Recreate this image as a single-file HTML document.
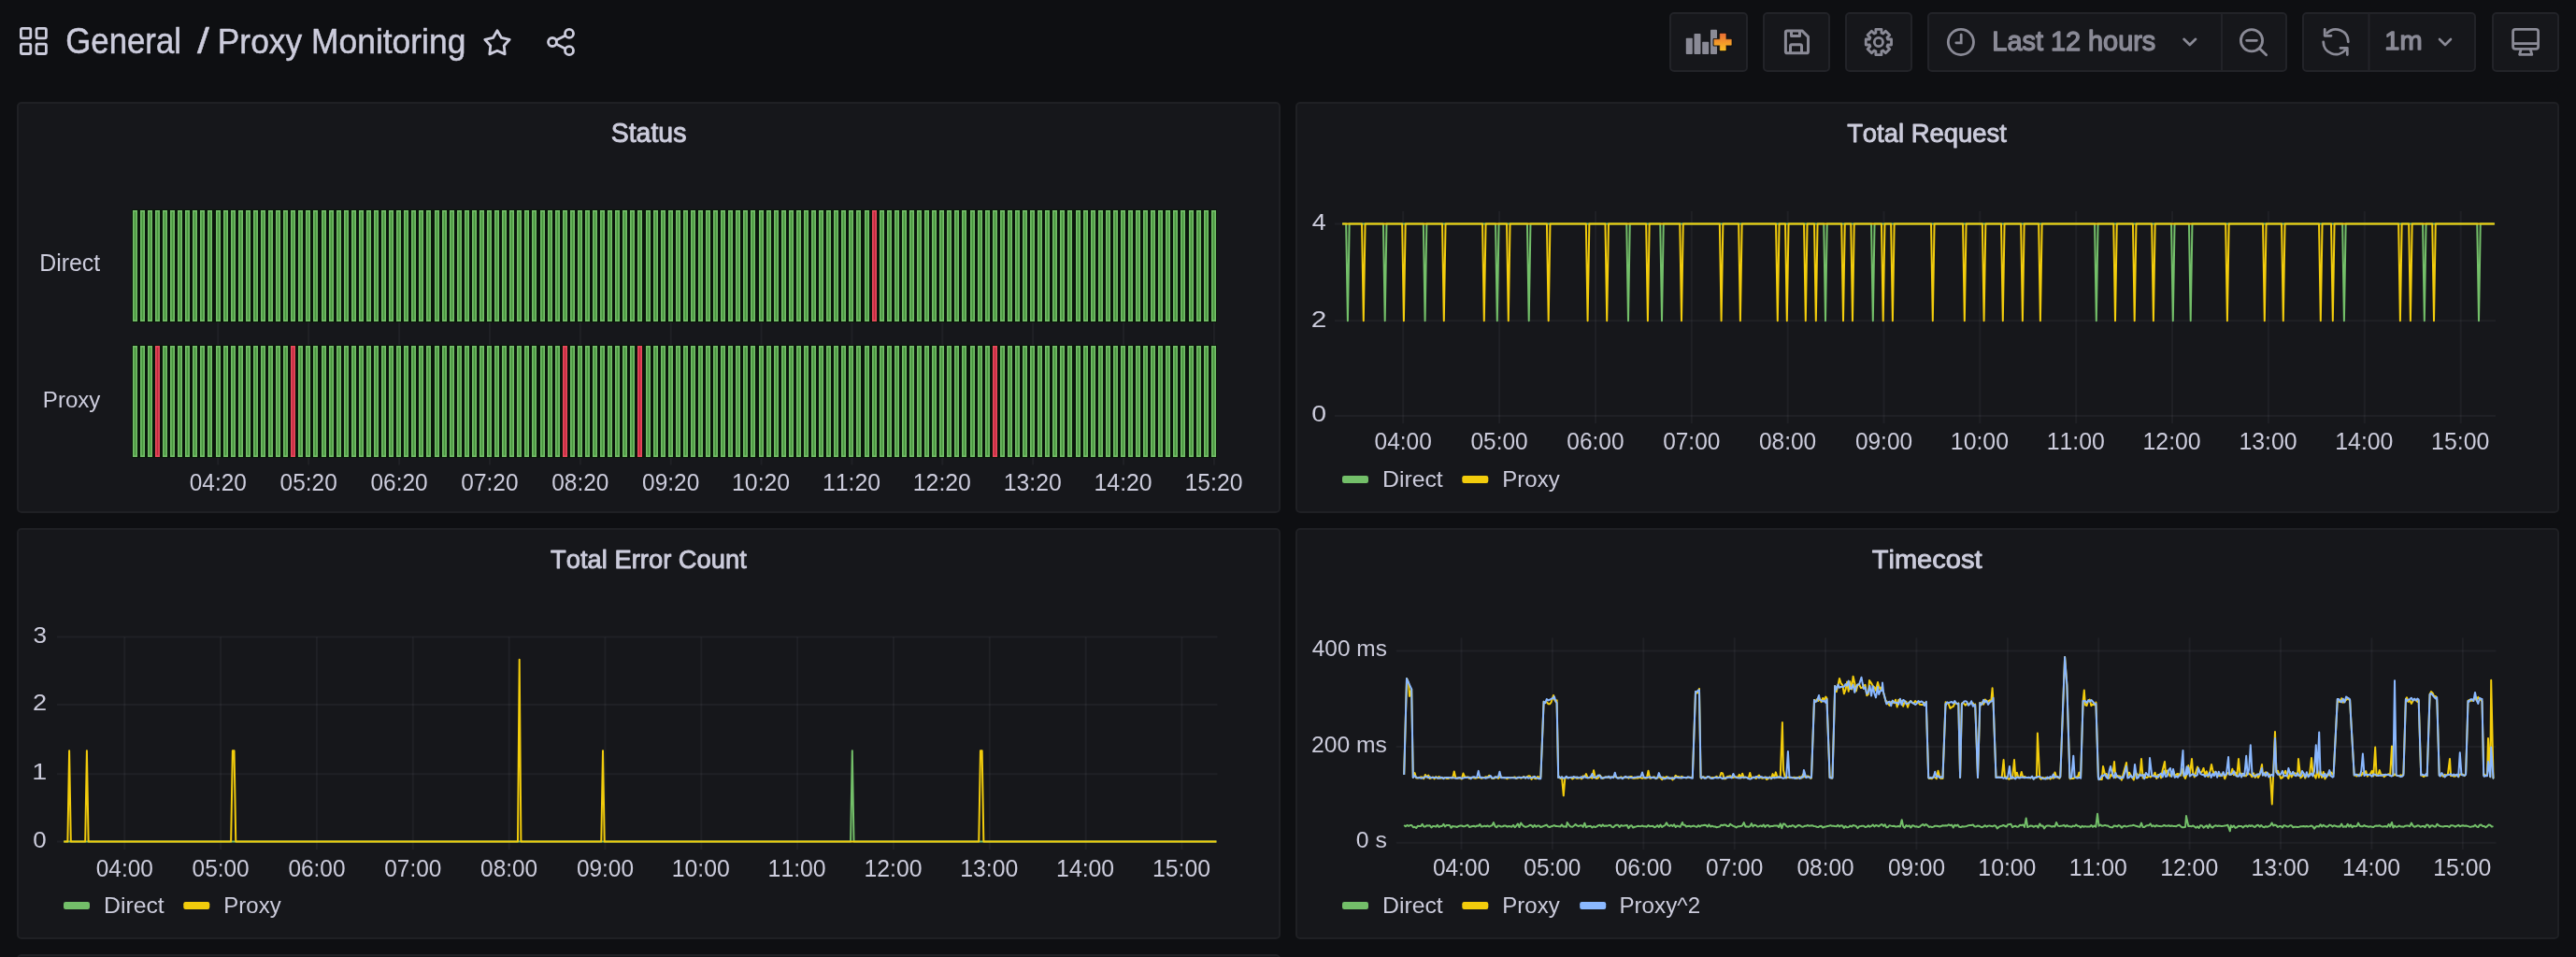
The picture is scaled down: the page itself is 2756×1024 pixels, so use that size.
<!DOCTYPE html>
<html><head><meta charset="utf-8"><title>Proxy Monitoring - Grafana</title>
<style>
html,body{margin:0;padding:0;background:#0e0f12;width:2756px;height:1024px;overflow:hidden}
svg{display:block;font-family:"Liberation Sans",sans-serif;font-kerning:none;will-change:transform}
text{font-kerning:none}
</style></head><body>
<svg width="2756" height="1024" viewBox="0 0 2756 1024">
<rect x="0" y="0" width="2756" height="1024" fill="#0e0f12"/>
<rect x="22.40" y="30.40" width="10.40" height="10.40" rx="1.5" fill="none" stroke="#ccccdc" stroke-width="2.8"/>
<rect x="39.00" y="30.40" width="10.40" height="10.40" rx="1.5" fill="none" stroke="#ccccdc" stroke-width="2.8"/>
<rect x="22.40" y="47.10" width="10.40" height="10.40" rx="1.5" fill="none" stroke="#ccccdc" stroke-width="2.8"/>
<rect x="39.00" y="47.10" width="10.40" height="10.40" rx="1.5" fill="none" stroke="#ccccdc" stroke-width="2.8"/>
<text x="70.20" y="57.05" font-size="38.81" textLength="123.88" lengthAdjust="spacingAndGlyphs" fill="#ccccdc" stroke="#ccccdc" stroke-width="0.50" stroke-linejoin="round">General</text>
<text x="211.05" y="57.05" font-size="38.81" textLength="12.90" lengthAdjust="spacingAndGlyphs" fill="#ccccdc" stroke="#ccccdc" stroke-width="0.50" stroke-linejoin="round">/</text>
<text x="232.75" y="56.75" font-size="37.06" textLength="265.59" lengthAdjust="spacingAndGlyphs" fill="#ccccdc" stroke="#ccccdc" stroke-width="0.50" stroke-linejoin="round">Proxy Monitoring</text>
<path d="M532.00 32.70 L536.47 40.45 L545.22 42.30 L539.23 48.95 L540.17 57.85 L532.00 54.20 L523.83 57.85 L524.77 48.95 L518.78 42.30 L527.53 40.45 Z" fill="none" stroke="#ccccdc" stroke-width="2.8" stroke-linejoin="round"/>
<g fill="none" stroke="#ccccdc" stroke-width="2.8">
<circle cx="591" cy="45" r="4.5"/><circle cx="609" cy="35.9" r="4.5"/><circle cx="609" cy="54.2" r="4.5"/>
<path d="M595 43 L605 37.9 M595 47.1 L605 52.2"/>
</g>
<rect x="1787.00" y="14.00" width="82.00" height="62.00" rx="4" fill="#16171b" stroke="#222328" stroke-width="2"/>
<rect x="1887.00" y="14.00" width="70.00" height="62.00" rx="4" fill="#16171b" stroke="#222328" stroke-width="2"/>
<rect x="1975.00" y="14.00" width="70.00" height="62.00" rx="4" fill="#16171b" stroke="#222328" stroke-width="2"/>
<rect x="2063.00" y="14.00" width="383.00" height="62.00" rx="4" fill="#16171b" stroke="#222328" stroke-width="2"/>
<rect x="2464.00" y="14.00" width="184.00" height="62.00" rx="4" fill="#16171b" stroke="#222328" stroke-width="2"/>
<rect x="2667.00" y="14.00" width="70.00" height="62.00" rx="4" fill="#16171b" stroke="#222328" stroke-width="2"/>
<line x1="2377" y1="14" x2="2377" y2="76" stroke="#222328" stroke-width="2"/>
<line x1="2534.5" y1="14" x2="2534.5" y2="76" stroke="#222328" stroke-width="2"/>
<rect x="1803.80" y="40.80" width="7.00" height="17.20" rx="0.8" fill="#8a8a96"/>
<rect x="1812.50" y="35.90" width="7.00" height="22.10" rx="0.8" fill="#8a8a96"/>
<rect x="1821.20" y="44.80" width="7.00" height="13.20" rx="0.8" fill="#8a8a96"/>
<rect x="1830.00" y="31.70" width="7.00" height="26.30" rx="0.8" fill="#8a8a96"/>
<defs><linearGradient id="og" x1="0" y1="0" x2="0" y2="1"><stop offset="0" stop-color="#ea6e34"/><stop offset="0.55" stop-color="#f39a2a"/><stop offset="1" stop-color="#fbbd22"/></linearGradient></defs>
<path d="M1840.2 36.1 h6.1 v6.1 h6 v6 h-6 v5.7 h-6.1 v-5.7 h-6.3 v-6 h6.3 z" fill="none" stroke="#0e0f12" stroke-width="2.6" stroke-linejoin="round"/>
<path d="M1840.2 36.1 h6.1 v6.1 h6 v6 h-6 v5.7 h-6.1 v-5.7 h-6.3 v-6 h6.3 z" fill="url(#og)" stroke="url(#og)" stroke-width="0.6" stroke-linejoin="round"/>
<g fill="none" stroke="#8a8a96" stroke-width="3" stroke-linejoin="round">
<path d="M1912 32.9 h16 l6.5 6.5 v15.8 a1.6 1.6 0 0 1 -1.6 1.6 h-20.9 a1.6 1.6 0 0 1 -1.6 -1.6 v-20.7 a1.6 1.6 0 0 1 1.6 -1.6 z"/>
<path d="M1916.5 33 v5.5 h9 v-5.5"/><path d="M1915.5 56.5 v-7.2 a1.5 1.5 0 0 1 1.5 -1.5 h9 a1.5 1.5 0 0 1 1.5 1.5 v7.2"/>
</g>
<path d="M2023.56 41.94 L2023.56 48.06 L2019.64 48.01 L2018.92 49.76 L2021.72 52.50 L2017.40 56.82 L2014.66 54.02 L2012.91 54.74 L2012.96 58.66 L2006.84 58.66 L2006.89 54.74 L2005.14 54.02 L2002.40 56.82 L1998.08 52.50 L2000.88 49.76 L2000.16 48.01 L1996.24 48.06 L1996.24 41.94 L2000.16 41.99 L2000.88 40.24 L1998.08 37.50 L2002.40 33.18 L2005.14 35.98 L2006.89 35.26 L2006.84 31.34 L2012.96 31.34 L2012.91 35.26 L2014.66 35.98 L2017.40 33.18 L2021.72 37.50 L2018.92 40.24 L2019.64 41.99 Z" fill="none" stroke="#8a8a96" stroke-width="2.8" stroke-linejoin="round"/>
<circle cx="2009.9" cy="45.0" r="4.6" fill="none" stroke="#8a8a96" stroke-width="2.8"/>
<g fill="none" stroke="#8a8a96" stroke-width="2.8" stroke-linecap="round">
<circle cx="2097.9" cy="45" r="13.6"/><path d="M2098.2 37.2 v8.6 h-5.4"/>
</g>
<text x="2131.38" y="53.65" font-size="28.63" textLength="174.91" lengthAdjust="spacingAndGlyphs" fill="#8a8a96" stroke="#8a8a96" stroke-width="1.30" stroke-linejoin="round">Last 12 hours</text>
<path d="M2336.5 41.8 L2342.8 48 L2349.1 41.8" fill="none" stroke="#8a8a96" stroke-width="2.6" stroke-linecap="round" stroke-linejoin="round"/>
<g fill="none" stroke="#8a8a96" stroke-width="2.8" stroke-linecap="round">
<circle cx="2409" cy="43.3" r="11.6"/><path d="M2417.6 51.9 L2424.6 58.8 M2403.6 43.3 h10.8"/>
</g>
<g fill="none" stroke="#8a8a96" stroke-width="2.8" stroke-linecap="round" stroke-linejoin="round">
<path d="M2489.76 35.23 A13.3 13.3 0 0 1 2512.3 44.8"/><path d="M2485.7 44.8 A13.3 13.3 0 0 0 2509.19 53.35"/>
<path d="M2487.2 31.4 V38.3 H2494"/><path d="M2504 51.3 H2511.3 V58.6"/>
</g>
<text x="2551.34" y="53.35" font-size="26.74" textLength="40.21" lengthAdjust="spacingAndGlyphs" fill="#8a8a96" stroke="#8a8a96" stroke-width="1.30" stroke-linejoin="round">1m</text>
<path d="M2610 42 L2616 48 L2622 42" fill="none" stroke="#8a8a96" stroke-width="2.6" stroke-linecap="round" stroke-linejoin="round"/>
<g fill="none" stroke="#8a8a96" stroke-width="2.8" stroke-linejoin="round">
<rect x="2688.6" y="31.4" width="27" height="21" rx="2.6"/><path d="M2688.6 46.6 h27"/><path d="M2697 53.3 L2695.6 58.4 H2708.8 L2707.4 53.3" stroke-linecap="round"/>
</g>
<rect x="19.00" y="110.00" width="1350.00" height="438.00" rx="4" fill="#16171b" stroke="#1f2024" stroke-width="2"/>
<text x="653.66" y="151.55" font-size="28.78" textLength="80.72" lengthAdjust="spacingAndGlyphs" fill="#ccccdc" stroke="#ccccdc" stroke-width="0.90" stroke-linejoin="round">Status</text>
<text x="42.16" y="290.20" font-size="25.58" textLength="65.03" lengthAdjust="spacingAndGlyphs" fill="#ccccdc">Direct</text>
<text x="45.82" y="436.20" font-size="23.98" textLength="61.62" lengthAdjust="spacingAndGlyphs" fill="#ccccdc">Proxy</text>
<line x1="233.30" y1="344" x2="233.30" y2="370" stroke="rgba(204,204,220,0.055)" stroke-width="2"/>
<line x1="233.30" y1="489" x2="233.30" y2="497.5" stroke="rgba(204,204,220,0.055)" stroke-width="2"/>
<line x1="330.18" y1="344" x2="330.18" y2="370" stroke="rgba(204,204,220,0.055)" stroke-width="2"/>
<line x1="330.18" y1="489" x2="330.18" y2="497.5" stroke="rgba(204,204,220,0.055)" stroke-width="2"/>
<line x1="427.05" y1="344" x2="427.05" y2="370" stroke="rgba(204,204,220,0.055)" stroke-width="2"/>
<line x1="427.05" y1="489" x2="427.05" y2="497.5" stroke="rgba(204,204,220,0.055)" stroke-width="2"/>
<line x1="523.92" y1="344" x2="523.92" y2="370" stroke="rgba(204,204,220,0.055)" stroke-width="2"/>
<line x1="523.92" y1="489" x2="523.92" y2="497.5" stroke="rgba(204,204,220,0.055)" stroke-width="2"/>
<line x1="620.80" y1="344" x2="620.80" y2="370" stroke="rgba(204,204,220,0.055)" stroke-width="2"/>
<line x1="620.80" y1="489" x2="620.80" y2="497.5" stroke="rgba(204,204,220,0.055)" stroke-width="2"/>
<line x1="717.67" y1="344" x2="717.67" y2="370" stroke="rgba(204,204,220,0.055)" stroke-width="2"/>
<line x1="717.67" y1="489" x2="717.67" y2="497.5" stroke="rgba(204,204,220,0.055)" stroke-width="2"/>
<line x1="814.55" y1="344" x2="814.55" y2="370" stroke="rgba(204,204,220,0.055)" stroke-width="2"/>
<line x1="814.55" y1="489" x2="814.55" y2="497.5" stroke="rgba(204,204,220,0.055)" stroke-width="2"/>
<line x1="911.42" y1="344" x2="911.42" y2="370" stroke="rgba(204,204,220,0.055)" stroke-width="2"/>
<line x1="911.42" y1="489" x2="911.42" y2="497.5" stroke="rgba(204,204,220,0.055)" stroke-width="2"/>
<line x1="1008.30" y1="344" x2="1008.30" y2="370" stroke="rgba(204,204,220,0.055)" stroke-width="2"/>
<line x1="1008.30" y1="489" x2="1008.30" y2="497.5" stroke="rgba(204,204,220,0.055)" stroke-width="2"/>
<line x1="1105.17" y1="344" x2="1105.17" y2="370" stroke="rgba(204,204,220,0.055)" stroke-width="2"/>
<line x1="1105.17" y1="489" x2="1105.17" y2="497.5" stroke="rgba(204,204,220,0.055)" stroke-width="2"/>
<line x1="1202.05" y1="344" x2="1202.05" y2="370" stroke="rgba(204,204,220,0.055)" stroke-width="2"/>
<line x1="1202.05" y1="489" x2="1202.05" y2="497.5" stroke="rgba(204,204,220,0.055)" stroke-width="2"/>
<line x1="1298.92" y1="344" x2="1298.92" y2="370" stroke="rgba(204,204,220,0.055)" stroke-width="2"/>
<line x1="1298.92" y1="489" x2="1298.92" y2="497.5" stroke="rgba(204,204,220,0.055)" stroke-width="2"/>
<rect x="141" y="224" width="1161" height="121" fill="#0a160b"/>
<g><rect x="142" y="225" width="5" height="119" fill="#72bd67"/><rect x="143.65" y="226.70" width="1.7" height="115.60" fill="#47933d"/><rect x="150" y="225" width="5" height="119" fill="#72bd67"/><rect x="151.65" y="226.70" width="1.7" height="115.60" fill="#47933d"/><rect x="158" y="225" width="5" height="119" fill="#72bd67"/><rect x="159.65" y="226.70" width="1.7" height="115.60" fill="#47933d"/><rect x="166" y="225" width="5" height="119" fill="#72bd67"/><rect x="167.65" y="226.70" width="1.7" height="115.60" fill="#47933d"/><rect x="174" y="225" width="5" height="119" fill="#72bd67"/><rect x="175.65" y="226.70" width="1.7" height="115.60" fill="#47933d"/><rect x="182" y="225" width="5" height="119" fill="#72bd67"/><rect x="183.65" y="226.70" width="1.7" height="115.60" fill="#47933d"/><rect x="190" y="225" width="5" height="119" fill="#72bd67"/><rect x="191.65" y="226.70" width="1.7" height="115.60" fill="#47933d"/><rect x="198" y="225" width="5" height="119" fill="#72bd67"/><rect x="199.65" y="226.70" width="1.7" height="115.60" fill="#47933d"/><rect x="206" y="225" width="5" height="119" fill="#72bd67"/><rect x="207.65" y="226.70" width="1.7" height="115.60" fill="#47933d"/><rect x="214" y="225" width="5" height="119" fill="#72bd67"/><rect x="215.65" y="226.70" width="1.7" height="115.60" fill="#47933d"/><rect x="222" y="225" width="5" height="119" fill="#72bd67"/><rect x="223.65" y="226.70" width="1.7" height="115.60" fill="#47933d"/><rect x="231" y="225" width="5" height="119" fill="#72bd67"/><rect x="232.65" y="226.70" width="1.7" height="115.60" fill="#47933d"/><rect x="239" y="225" width="5" height="119" fill="#72bd67"/><rect x="240.65" y="226.70" width="1.7" height="115.60" fill="#47933d"/><rect x="247" y="225" width="5" height="119" fill="#72bd67"/><rect x="248.65" y="226.70" width="1.7" height="115.60" fill="#47933d"/><rect x="255" y="225" width="5" height="119" fill="#72bd67"/><rect x="256.65" y="226.70" width="1.7" height="115.60" fill="#47933d"/><rect x="263" y="225" width="5" height="119" fill="#72bd67"/><rect x="264.65" y="226.70" width="1.7" height="115.60" fill="#47933d"/><rect x="271" y="225" width="5" height="119" fill="#72bd67"/><rect x="272.65" y="226.70" width="1.7" height="115.60" fill="#47933d"/><rect x="279" y="225" width="5" height="119" fill="#72bd67"/><rect x="280.65" y="226.70" width="1.7" height="115.60" fill="#47933d"/><rect x="287" y="225" width="5" height="119" fill="#72bd67"/><rect x="288.65" y="226.70" width="1.7" height="115.60" fill="#47933d"/><rect x="295" y="225" width="5" height="119" fill="#72bd67"/><rect x="296.65" y="226.70" width="1.7" height="115.60" fill="#47933d"/><rect x="303" y="225" width="5" height="119" fill="#72bd67"/><rect x="304.65" y="226.70" width="1.7" height="115.60" fill="#47933d"/><rect x="311" y="225" width="5" height="119" fill="#72bd67"/><rect x="312.65" y="226.70" width="1.7" height="115.60" fill="#47933d"/><rect x="319" y="225" width="5" height="119" fill="#72bd67"/><rect x="320.65" y="226.70" width="1.7" height="115.60" fill="#47933d"/><rect x="327" y="225" width="5" height="119" fill="#72bd67"/><rect x="328.65" y="226.70" width="1.7" height="115.60" fill="#47933d"/><rect x="335" y="225" width="5" height="119" fill="#72bd67"/><rect x="336.65" y="226.70" width="1.7" height="115.60" fill="#47933d"/><rect x="344" y="225" width="5" height="119" fill="#72bd67"/><rect x="345.65" y="226.70" width="1.7" height="115.60" fill="#47933d"/><rect x="352" y="225" width="5" height="119" fill="#72bd67"/><rect x="353.65" y="226.70" width="1.7" height="115.60" fill="#47933d"/><rect x="360" y="225" width="5" height="119" fill="#72bd67"/><rect x="361.65" y="226.70" width="1.7" height="115.60" fill="#47933d"/><rect x="368" y="225" width="5" height="119" fill="#72bd67"/><rect x="369.65" y="226.70" width="1.7" height="115.60" fill="#47933d"/><rect x="376" y="225" width="5" height="119" fill="#72bd67"/><rect x="377.65" y="226.70" width="1.7" height="115.60" fill="#47933d"/><rect x="384" y="225" width="5" height="119" fill="#72bd67"/><rect x="385.65" y="226.70" width="1.7" height="115.60" fill="#47933d"/><rect x="392" y="225" width="5" height="119" fill="#72bd67"/><rect x="393.65" y="226.70" width="1.7" height="115.60" fill="#47933d"/><rect x="400" y="225" width="5" height="119" fill="#72bd67"/><rect x="401.65" y="226.70" width="1.7" height="115.60" fill="#47933d"/><rect x="408" y="225" width="5" height="119" fill="#72bd67"/><rect x="409.65" y="226.70" width="1.7" height="115.60" fill="#47933d"/><rect x="416" y="225" width="5" height="119" fill="#72bd67"/><rect x="417.65" y="226.70" width="1.7" height="115.60" fill="#47933d"/><rect x="424" y="225" width="5" height="119" fill="#72bd67"/><rect x="425.65" y="226.70" width="1.7" height="115.60" fill="#47933d"/><rect x="432" y="225" width="5" height="119" fill="#72bd67"/><rect x="433.65" y="226.70" width="1.7" height="115.60" fill="#47933d"/><rect x="440" y="225" width="5" height="119" fill="#72bd67"/><rect x="441.65" y="226.70" width="1.7" height="115.60" fill="#47933d"/><rect x="448" y="225" width="5" height="119" fill="#72bd67"/><rect x="449.65" y="226.70" width="1.7" height="115.60" fill="#47933d"/><rect x="456" y="225" width="5" height="119" fill="#72bd67"/><rect x="457.65" y="226.70" width="1.7" height="115.60" fill="#47933d"/><rect x="465" y="225" width="5" height="119" fill="#72bd67"/><rect x="466.65" y="226.70" width="1.7" height="115.60" fill="#47933d"/><rect x="473" y="225" width="5" height="119" fill="#72bd67"/><rect x="474.65" y="226.70" width="1.7" height="115.60" fill="#47933d"/><rect x="481" y="225" width="5" height="119" fill="#72bd67"/><rect x="482.65" y="226.70" width="1.7" height="115.60" fill="#47933d"/><rect x="489" y="225" width="5" height="119" fill="#72bd67"/><rect x="490.65" y="226.70" width="1.7" height="115.60" fill="#47933d"/><rect x="497" y="225" width="5" height="119" fill="#72bd67"/><rect x="498.65" y="226.70" width="1.7" height="115.60" fill="#47933d"/><rect x="505" y="225" width="5" height="119" fill="#72bd67"/><rect x="506.65" y="226.70" width="1.7" height="115.60" fill="#47933d"/><rect x="513" y="225" width="5" height="119" fill="#72bd67"/><rect x="514.65" y="226.70" width="1.7" height="115.60" fill="#47933d"/><rect x="521" y="225" width="5" height="119" fill="#72bd67"/><rect x="522.65" y="226.70" width="1.7" height="115.60" fill="#47933d"/><rect x="529" y="225" width="5" height="119" fill="#72bd67"/><rect x="530.65" y="226.70" width="1.7" height="115.60" fill="#47933d"/><rect x="537" y="225" width="5" height="119" fill="#72bd67"/><rect x="538.65" y="226.70" width="1.7" height="115.60" fill="#47933d"/><rect x="545" y="225" width="5" height="119" fill="#72bd67"/><rect x="546.65" y="226.70" width="1.7" height="115.60" fill="#47933d"/><rect x="553" y="225" width="5" height="119" fill="#72bd67"/><rect x="554.65" y="226.70" width="1.7" height="115.60" fill="#47933d"/><rect x="561" y="225" width="5" height="119" fill="#72bd67"/><rect x="562.65" y="226.70" width="1.7" height="115.60" fill="#47933d"/><rect x="569" y="225" width="5" height="119" fill="#72bd67"/><rect x="570.65" y="226.70" width="1.7" height="115.60" fill="#47933d"/><rect x="578" y="225" width="5" height="119" fill="#72bd67"/><rect x="579.65" y="226.70" width="1.7" height="115.60" fill="#47933d"/><rect x="586" y="225" width="5" height="119" fill="#72bd67"/><rect x="587.65" y="226.70" width="1.7" height="115.60" fill="#47933d"/><rect x="594" y="225" width="5" height="119" fill="#72bd67"/><rect x="595.65" y="226.70" width="1.7" height="115.60" fill="#47933d"/><rect x="602" y="225" width="5" height="119" fill="#72bd67"/><rect x="603.65" y="226.70" width="1.7" height="115.60" fill="#47933d"/><rect x="610" y="225" width="5" height="119" fill="#72bd67"/><rect x="611.65" y="226.70" width="1.7" height="115.60" fill="#47933d"/><rect x="618" y="225" width="5" height="119" fill="#72bd67"/><rect x="619.65" y="226.70" width="1.7" height="115.60" fill="#47933d"/><rect x="626" y="225" width="5" height="119" fill="#72bd67"/><rect x="627.65" y="226.70" width="1.7" height="115.60" fill="#47933d"/><rect x="634" y="225" width="5" height="119" fill="#72bd67"/><rect x="635.65" y="226.70" width="1.7" height="115.60" fill="#47933d"/><rect x="642" y="225" width="5" height="119" fill="#72bd67"/><rect x="643.65" y="226.70" width="1.7" height="115.60" fill="#47933d"/><rect x="650" y="225" width="5" height="119" fill="#72bd67"/><rect x="651.65" y="226.70" width="1.7" height="115.60" fill="#47933d"/><rect x="658" y="225" width="5" height="119" fill="#72bd67"/><rect x="659.65" y="226.70" width="1.7" height="115.60" fill="#47933d"/><rect x="666" y="225" width="5" height="119" fill="#72bd67"/><rect x="667.65" y="226.70" width="1.7" height="115.60" fill="#47933d"/><rect x="674" y="225" width="5" height="119" fill="#72bd67"/><rect x="675.65" y="226.70" width="1.7" height="115.60" fill="#47933d"/><rect x="682" y="225" width="5" height="119" fill="#72bd67"/><rect x="683.65" y="226.70" width="1.7" height="115.60" fill="#47933d"/><rect x="691" y="225" width="5" height="119" fill="#72bd67"/><rect x="692.65" y="226.70" width="1.7" height="115.60" fill="#47933d"/><rect x="699" y="225" width="5" height="119" fill="#72bd67"/><rect x="700.65" y="226.70" width="1.7" height="115.60" fill="#47933d"/><rect x="707" y="225" width="5" height="119" fill="#72bd67"/><rect x="708.65" y="226.70" width="1.7" height="115.60" fill="#47933d"/><rect x="715" y="225" width="5" height="119" fill="#72bd67"/><rect x="716.65" y="226.70" width="1.7" height="115.60" fill="#47933d"/><rect x="723" y="225" width="5" height="119" fill="#72bd67"/><rect x="724.65" y="226.70" width="1.7" height="115.60" fill="#47933d"/><rect x="731" y="225" width="5" height="119" fill="#72bd67"/><rect x="732.65" y="226.70" width="1.7" height="115.60" fill="#47933d"/><rect x="739" y="225" width="5" height="119" fill="#72bd67"/><rect x="740.65" y="226.70" width="1.7" height="115.60" fill="#47933d"/><rect x="747" y="225" width="5" height="119" fill="#72bd67"/><rect x="748.65" y="226.70" width="1.7" height="115.60" fill="#47933d"/><rect x="755" y="225" width="5" height="119" fill="#72bd67"/><rect x="756.65" y="226.70" width="1.7" height="115.60" fill="#47933d"/><rect x="763" y="225" width="5" height="119" fill="#72bd67"/><rect x="764.65" y="226.70" width="1.7" height="115.60" fill="#47933d"/><rect x="771" y="225" width="5" height="119" fill="#72bd67"/><rect x="772.65" y="226.70" width="1.7" height="115.60" fill="#47933d"/><rect x="779" y="225" width="5" height="119" fill="#72bd67"/><rect x="780.65" y="226.70" width="1.7" height="115.60" fill="#47933d"/><rect x="787" y="225" width="5" height="119" fill="#72bd67"/><rect x="788.65" y="226.70" width="1.7" height="115.60" fill="#47933d"/><rect x="795" y="225" width="5" height="119" fill="#72bd67"/><rect x="796.65" y="226.70" width="1.7" height="115.60" fill="#47933d"/><rect x="803" y="225" width="5" height="119" fill="#72bd67"/><rect x="804.65" y="226.70" width="1.7" height="115.60" fill="#47933d"/><rect x="812" y="225" width="5" height="119" fill="#72bd67"/><rect x="813.65" y="226.70" width="1.7" height="115.60" fill="#47933d"/><rect x="820" y="225" width="5" height="119" fill="#72bd67"/><rect x="821.65" y="226.70" width="1.7" height="115.60" fill="#47933d"/><rect x="828" y="225" width="5" height="119" fill="#72bd67"/><rect x="829.65" y="226.70" width="1.7" height="115.60" fill="#47933d"/><rect x="836" y="225" width="5" height="119" fill="#72bd67"/><rect x="837.65" y="226.70" width="1.7" height="115.60" fill="#47933d"/><rect x="844" y="225" width="5" height="119" fill="#72bd67"/><rect x="845.65" y="226.70" width="1.7" height="115.60" fill="#47933d"/><rect x="852" y="225" width="5" height="119" fill="#72bd67"/><rect x="853.65" y="226.70" width="1.7" height="115.60" fill="#47933d"/><rect x="860" y="225" width="5" height="119" fill="#72bd67"/><rect x="861.65" y="226.70" width="1.7" height="115.60" fill="#47933d"/><rect x="868" y="225" width="5" height="119" fill="#72bd67"/><rect x="869.65" y="226.70" width="1.7" height="115.60" fill="#47933d"/><rect x="876" y="225" width="5" height="119" fill="#72bd67"/><rect x="877.65" y="226.70" width="1.7" height="115.60" fill="#47933d"/><rect x="884" y="225" width="5" height="119" fill="#72bd67"/><rect x="885.65" y="226.70" width="1.7" height="115.60" fill="#47933d"/><rect x="892" y="225" width="5" height="119" fill="#72bd67"/><rect x="893.65" y="226.70" width="1.7" height="115.60" fill="#47933d"/><rect x="900" y="225" width="5" height="119" fill="#72bd67"/><rect x="901.65" y="226.70" width="1.7" height="115.60" fill="#47933d"/><rect x="908" y="225" width="5" height="119" fill="#72bd67"/><rect x="909.65" y="226.70" width="1.7" height="115.60" fill="#47933d"/><rect x="916" y="225" width="5" height="119" fill="#72bd67"/><rect x="917.65" y="226.70" width="1.7" height="115.60" fill="#47933d"/><rect x="925" y="225" width="5" height="119" fill="#72bd67"/><rect x="926.65" y="226.70" width="1.7" height="115.60" fill="#47933d"/><rect x="933" y="225" width="5" height="119" fill="#e6495c"/><rect x="934.65" y="226.70" width="1.7" height="115.60" fill="#c0283e"/><rect x="941" y="225" width="5" height="119" fill="#72bd67"/><rect x="942.65" y="226.70" width="1.7" height="115.60" fill="#47933d"/><rect x="949" y="225" width="5" height="119" fill="#72bd67"/><rect x="950.65" y="226.70" width="1.7" height="115.60" fill="#47933d"/><rect x="957" y="225" width="5" height="119" fill="#72bd67"/><rect x="958.65" y="226.70" width="1.7" height="115.60" fill="#47933d"/><rect x="965" y="225" width="5" height="119" fill="#72bd67"/><rect x="966.65" y="226.70" width="1.7" height="115.60" fill="#47933d"/><rect x="973" y="225" width="5" height="119" fill="#72bd67"/><rect x="974.65" y="226.70" width="1.7" height="115.60" fill="#47933d"/><rect x="981" y="225" width="5" height="119" fill="#72bd67"/><rect x="982.65" y="226.70" width="1.7" height="115.60" fill="#47933d"/><rect x="989" y="225" width="5" height="119" fill="#72bd67"/><rect x="990.65" y="226.70" width="1.7" height="115.60" fill="#47933d"/><rect x="997" y="225" width="5" height="119" fill="#72bd67"/><rect x="998.65" y="226.70" width="1.7" height="115.60" fill="#47933d"/><rect x="1005" y="225" width="5" height="119" fill="#72bd67"/><rect x="1006.65" y="226.70" width="1.7" height="115.60" fill="#47933d"/><rect x="1013" y="225" width="5" height="119" fill="#72bd67"/><rect x="1014.65" y="226.70" width="1.7" height="115.60" fill="#47933d"/><rect x="1021" y="225" width="5" height="119" fill="#72bd67"/><rect x="1022.65" y="226.70" width="1.7" height="115.60" fill="#47933d"/><rect x="1029" y="225" width="5" height="119" fill="#72bd67"/><rect x="1030.65" y="226.70" width="1.7" height="115.60" fill="#47933d"/><rect x="1038" y="225" width="5" height="119" fill="#72bd67"/><rect x="1039.65" y="226.70" width="1.7" height="115.60" fill="#47933d"/><rect x="1046" y="225" width="5" height="119" fill="#72bd67"/><rect x="1047.65" y="226.70" width="1.7" height="115.60" fill="#47933d"/><rect x="1054" y="225" width="5" height="119" fill="#72bd67"/><rect x="1055.65" y="226.70" width="1.7" height="115.60" fill="#47933d"/><rect x="1062" y="225" width="5" height="119" fill="#72bd67"/><rect x="1063.65" y="226.70" width="1.7" height="115.60" fill="#47933d"/><rect x="1070" y="225" width="5" height="119" fill="#72bd67"/><rect x="1071.65" y="226.70" width="1.7" height="115.60" fill="#47933d"/><rect x="1078" y="225" width="5" height="119" fill="#72bd67"/><rect x="1079.65" y="226.70" width="1.7" height="115.60" fill="#47933d"/><rect x="1086" y="225" width="5" height="119" fill="#72bd67"/><rect x="1087.65" y="226.70" width="1.7" height="115.60" fill="#47933d"/><rect x="1094" y="225" width="5" height="119" fill="#72bd67"/><rect x="1095.65" y="226.70" width="1.7" height="115.60" fill="#47933d"/><rect x="1102" y="225" width="5" height="119" fill="#72bd67"/><rect x="1103.65" y="226.70" width="1.7" height="115.60" fill="#47933d"/><rect x="1110" y="225" width="5" height="119" fill="#72bd67"/><rect x="1111.65" y="226.70" width="1.7" height="115.60" fill="#47933d"/><rect x="1118" y="225" width="5" height="119" fill="#72bd67"/><rect x="1119.65" y="226.70" width="1.7" height="115.60" fill="#47933d"/><rect x="1126" y="225" width="5" height="119" fill="#72bd67"/><rect x="1127.65" y="226.70" width="1.7" height="115.60" fill="#47933d"/><rect x="1134" y="225" width="5" height="119" fill="#72bd67"/><rect x="1135.65" y="226.70" width="1.7" height="115.60" fill="#47933d"/><rect x="1142" y="225" width="5" height="119" fill="#72bd67"/><rect x="1143.65" y="226.70" width="1.7" height="115.60" fill="#47933d"/><rect x="1151" y="225" width="5" height="119" fill="#72bd67"/><rect x="1152.65" y="226.70" width="1.7" height="115.60" fill="#47933d"/><rect x="1159" y="225" width="5" height="119" fill="#72bd67"/><rect x="1160.65" y="226.70" width="1.7" height="115.60" fill="#47933d"/><rect x="1167" y="225" width="5" height="119" fill="#72bd67"/><rect x="1168.65" y="226.70" width="1.7" height="115.60" fill="#47933d"/><rect x="1175" y="225" width="5" height="119" fill="#72bd67"/><rect x="1176.65" y="226.70" width="1.7" height="115.60" fill="#47933d"/><rect x="1183" y="225" width="5" height="119" fill="#72bd67"/><rect x="1184.65" y="226.70" width="1.7" height="115.60" fill="#47933d"/><rect x="1191" y="225" width="5" height="119" fill="#72bd67"/><rect x="1192.65" y="226.70" width="1.7" height="115.60" fill="#47933d"/><rect x="1199" y="225" width="5" height="119" fill="#72bd67"/><rect x="1200.65" y="226.70" width="1.7" height="115.60" fill="#47933d"/><rect x="1207" y="225" width="5" height="119" fill="#72bd67"/><rect x="1208.65" y="226.70" width="1.7" height="115.60" fill="#47933d"/><rect x="1215" y="225" width="5" height="119" fill="#72bd67"/><rect x="1216.65" y="226.70" width="1.7" height="115.60" fill="#47933d"/><rect x="1223" y="225" width="5" height="119" fill="#72bd67"/><rect x="1224.65" y="226.70" width="1.7" height="115.60" fill="#47933d"/><rect x="1231" y="225" width="5" height="119" fill="#72bd67"/><rect x="1232.65" y="226.70" width="1.7" height="115.60" fill="#47933d"/><rect x="1239" y="225" width="5" height="119" fill="#72bd67"/><rect x="1240.65" y="226.70" width="1.7" height="115.60" fill="#47933d"/><rect x="1247" y="225" width="5" height="119" fill="#72bd67"/><rect x="1248.65" y="226.70" width="1.7" height="115.60" fill="#47933d"/><rect x="1255" y="225" width="5" height="119" fill="#72bd67"/><rect x="1256.65" y="226.70" width="1.7" height="115.60" fill="#47933d"/><rect x="1263" y="225" width="5" height="119" fill="#72bd67"/><rect x="1264.65" y="226.70" width="1.7" height="115.60" fill="#47933d"/><rect x="1272" y="225" width="5" height="119" fill="#72bd67"/><rect x="1273.65" y="226.70" width="1.7" height="115.60" fill="#47933d"/><rect x="1280" y="225" width="5" height="119" fill="#72bd67"/><rect x="1281.65" y="226.70" width="1.7" height="115.60" fill="#47933d"/><rect x="1288" y="225" width="5" height="119" fill="#72bd67"/><rect x="1289.65" y="226.70" width="1.7" height="115.60" fill="#47933d"/><rect x="1296" y="225" width="5" height="119" fill="#72bd67"/><rect x="1297.65" y="226.70" width="1.7" height="115.60" fill="#47933d"/></g>
<rect x="141" y="369" width="1161" height="121" fill="#0a160b"/>
<g><rect x="142" y="370" width="5" height="119" fill="#72bd67"/><rect x="143.65" y="371.70" width="1.7" height="115.60" fill="#47933d"/><rect x="150" y="370" width="5" height="119" fill="#72bd67"/><rect x="151.65" y="371.70" width="1.7" height="115.60" fill="#47933d"/><rect x="158" y="370" width="5" height="119" fill="#72bd67"/><rect x="159.65" y="371.70" width="1.7" height="115.60" fill="#47933d"/><rect x="166" y="370" width="5" height="119" fill="#e6495c"/><rect x="167.65" y="371.70" width="1.7" height="115.60" fill="#c0283e"/><rect x="174" y="370" width="5" height="119" fill="#72bd67"/><rect x="175.65" y="371.70" width="1.7" height="115.60" fill="#47933d"/><rect x="182" y="370" width="5" height="119" fill="#72bd67"/><rect x="183.65" y="371.70" width="1.7" height="115.60" fill="#47933d"/><rect x="190" y="370" width="5" height="119" fill="#72bd67"/><rect x="191.65" y="371.70" width="1.7" height="115.60" fill="#47933d"/><rect x="198" y="370" width="5" height="119" fill="#72bd67"/><rect x="199.65" y="371.70" width="1.7" height="115.60" fill="#47933d"/><rect x="206" y="370" width="5" height="119" fill="#72bd67"/><rect x="207.65" y="371.70" width="1.7" height="115.60" fill="#47933d"/><rect x="214" y="370" width="5" height="119" fill="#72bd67"/><rect x="215.65" y="371.70" width="1.7" height="115.60" fill="#47933d"/><rect x="222" y="370" width="5" height="119" fill="#72bd67"/><rect x="223.65" y="371.70" width="1.7" height="115.60" fill="#47933d"/><rect x="231" y="370" width="5" height="119" fill="#72bd67"/><rect x="232.65" y="371.70" width="1.7" height="115.60" fill="#47933d"/><rect x="239" y="370" width="5" height="119" fill="#72bd67"/><rect x="240.65" y="371.70" width="1.7" height="115.60" fill="#47933d"/><rect x="247" y="370" width="5" height="119" fill="#72bd67"/><rect x="248.65" y="371.70" width="1.7" height="115.60" fill="#47933d"/><rect x="255" y="370" width="5" height="119" fill="#72bd67"/><rect x="256.65" y="371.70" width="1.7" height="115.60" fill="#47933d"/><rect x="263" y="370" width="5" height="119" fill="#72bd67"/><rect x="264.65" y="371.70" width="1.7" height="115.60" fill="#47933d"/><rect x="271" y="370" width="5" height="119" fill="#72bd67"/><rect x="272.65" y="371.70" width="1.7" height="115.60" fill="#47933d"/><rect x="279" y="370" width="5" height="119" fill="#72bd67"/><rect x="280.65" y="371.70" width="1.7" height="115.60" fill="#47933d"/><rect x="287" y="370" width="5" height="119" fill="#72bd67"/><rect x="288.65" y="371.70" width="1.7" height="115.60" fill="#47933d"/><rect x="295" y="370" width="5" height="119" fill="#72bd67"/><rect x="296.65" y="371.70" width="1.7" height="115.60" fill="#47933d"/><rect x="303" y="370" width="5" height="119" fill="#72bd67"/><rect x="304.65" y="371.70" width="1.7" height="115.60" fill="#47933d"/><rect x="311" y="370" width="5" height="119" fill="#e6495c"/><rect x="312.65" y="371.70" width="1.7" height="115.60" fill="#c0283e"/><rect x="319" y="370" width="5" height="119" fill="#72bd67"/><rect x="320.65" y="371.70" width="1.7" height="115.60" fill="#47933d"/><rect x="327" y="370" width="5" height="119" fill="#72bd67"/><rect x="328.65" y="371.70" width="1.7" height="115.60" fill="#47933d"/><rect x="335" y="370" width="5" height="119" fill="#72bd67"/><rect x="336.65" y="371.70" width="1.7" height="115.60" fill="#47933d"/><rect x="344" y="370" width="5" height="119" fill="#72bd67"/><rect x="345.65" y="371.70" width="1.7" height="115.60" fill="#47933d"/><rect x="352" y="370" width="5" height="119" fill="#72bd67"/><rect x="353.65" y="371.70" width="1.7" height="115.60" fill="#47933d"/><rect x="360" y="370" width="5" height="119" fill="#72bd67"/><rect x="361.65" y="371.70" width="1.7" height="115.60" fill="#47933d"/><rect x="368" y="370" width="5" height="119" fill="#72bd67"/><rect x="369.65" y="371.70" width="1.7" height="115.60" fill="#47933d"/><rect x="376" y="370" width="5" height="119" fill="#72bd67"/><rect x="377.65" y="371.70" width="1.7" height="115.60" fill="#47933d"/><rect x="384" y="370" width="5" height="119" fill="#72bd67"/><rect x="385.65" y="371.70" width="1.7" height="115.60" fill="#47933d"/><rect x="392" y="370" width="5" height="119" fill="#72bd67"/><rect x="393.65" y="371.70" width="1.7" height="115.60" fill="#47933d"/><rect x="400" y="370" width="5" height="119" fill="#72bd67"/><rect x="401.65" y="371.70" width="1.7" height="115.60" fill="#47933d"/><rect x="408" y="370" width="5" height="119" fill="#72bd67"/><rect x="409.65" y="371.70" width="1.7" height="115.60" fill="#47933d"/><rect x="416" y="370" width="5" height="119" fill="#72bd67"/><rect x="417.65" y="371.70" width="1.7" height="115.60" fill="#47933d"/><rect x="424" y="370" width="5" height="119" fill="#72bd67"/><rect x="425.65" y="371.70" width="1.7" height="115.60" fill="#47933d"/><rect x="432" y="370" width="5" height="119" fill="#72bd67"/><rect x="433.65" y="371.70" width="1.7" height="115.60" fill="#47933d"/><rect x="440" y="370" width="5" height="119" fill="#72bd67"/><rect x="441.65" y="371.70" width="1.7" height="115.60" fill="#47933d"/><rect x="448" y="370" width="5" height="119" fill="#72bd67"/><rect x="449.65" y="371.70" width="1.7" height="115.60" fill="#47933d"/><rect x="456" y="370" width="5" height="119" fill="#72bd67"/><rect x="457.65" y="371.70" width="1.7" height="115.60" fill="#47933d"/><rect x="465" y="370" width="5" height="119" fill="#72bd67"/><rect x="466.65" y="371.70" width="1.7" height="115.60" fill="#47933d"/><rect x="473" y="370" width="5" height="119" fill="#72bd67"/><rect x="474.65" y="371.70" width="1.7" height="115.60" fill="#47933d"/><rect x="481" y="370" width="5" height="119" fill="#72bd67"/><rect x="482.65" y="371.70" width="1.7" height="115.60" fill="#47933d"/><rect x="489" y="370" width="5" height="119" fill="#72bd67"/><rect x="490.65" y="371.70" width="1.7" height="115.60" fill="#47933d"/><rect x="497" y="370" width="5" height="119" fill="#72bd67"/><rect x="498.65" y="371.70" width="1.7" height="115.60" fill="#47933d"/><rect x="505" y="370" width="5" height="119" fill="#72bd67"/><rect x="506.65" y="371.70" width="1.7" height="115.60" fill="#47933d"/><rect x="513" y="370" width="5" height="119" fill="#72bd67"/><rect x="514.65" y="371.70" width="1.7" height="115.60" fill="#47933d"/><rect x="521" y="370" width="5" height="119" fill="#72bd67"/><rect x="522.65" y="371.70" width="1.7" height="115.60" fill="#47933d"/><rect x="529" y="370" width="5" height="119" fill="#72bd67"/><rect x="530.65" y="371.70" width="1.7" height="115.60" fill="#47933d"/><rect x="537" y="370" width="5" height="119" fill="#72bd67"/><rect x="538.65" y="371.70" width="1.7" height="115.60" fill="#47933d"/><rect x="545" y="370" width="5" height="119" fill="#72bd67"/><rect x="546.65" y="371.70" width="1.7" height="115.60" fill="#47933d"/><rect x="553" y="370" width="5" height="119" fill="#72bd67"/><rect x="554.65" y="371.70" width="1.7" height="115.60" fill="#47933d"/><rect x="561" y="370" width="5" height="119" fill="#72bd67"/><rect x="562.65" y="371.70" width="1.7" height="115.60" fill="#47933d"/><rect x="569" y="370" width="5" height="119" fill="#72bd67"/><rect x="570.65" y="371.70" width="1.7" height="115.60" fill="#47933d"/><rect x="578" y="370" width="5" height="119" fill="#72bd67"/><rect x="579.65" y="371.70" width="1.7" height="115.60" fill="#47933d"/><rect x="586" y="370" width="5" height="119" fill="#72bd67"/><rect x="587.65" y="371.70" width="1.7" height="115.60" fill="#47933d"/><rect x="594" y="370" width="5" height="119" fill="#72bd67"/><rect x="595.65" y="371.70" width="1.7" height="115.60" fill="#47933d"/><rect x="602" y="370" width="5" height="119" fill="#e6495c"/><rect x="603.65" y="371.70" width="1.7" height="115.60" fill="#c0283e"/><rect x="610" y="370" width="5" height="119" fill="#72bd67"/><rect x="611.65" y="371.70" width="1.7" height="115.60" fill="#47933d"/><rect x="618" y="370" width="5" height="119" fill="#72bd67"/><rect x="619.65" y="371.70" width="1.7" height="115.60" fill="#47933d"/><rect x="626" y="370" width="5" height="119" fill="#72bd67"/><rect x="627.65" y="371.70" width="1.7" height="115.60" fill="#47933d"/><rect x="634" y="370" width="5" height="119" fill="#72bd67"/><rect x="635.65" y="371.70" width="1.7" height="115.60" fill="#47933d"/><rect x="642" y="370" width="5" height="119" fill="#72bd67"/><rect x="643.65" y="371.70" width="1.7" height="115.60" fill="#47933d"/><rect x="650" y="370" width="5" height="119" fill="#72bd67"/><rect x="651.65" y="371.70" width="1.7" height="115.60" fill="#47933d"/><rect x="658" y="370" width="5" height="119" fill="#72bd67"/><rect x="659.65" y="371.70" width="1.7" height="115.60" fill="#47933d"/><rect x="666" y="370" width="5" height="119" fill="#72bd67"/><rect x="667.65" y="371.70" width="1.7" height="115.60" fill="#47933d"/><rect x="674" y="370" width="5" height="119" fill="#72bd67"/><rect x="675.65" y="371.70" width="1.7" height="115.60" fill="#47933d"/><rect x="682" y="370" width="5" height="119" fill="#e6495c"/><rect x="683.65" y="371.70" width="1.7" height="115.60" fill="#c0283e"/><rect x="691" y="370" width="5" height="119" fill="#72bd67"/><rect x="692.65" y="371.70" width="1.7" height="115.60" fill="#47933d"/><rect x="699" y="370" width="5" height="119" fill="#72bd67"/><rect x="700.65" y="371.70" width="1.7" height="115.60" fill="#47933d"/><rect x="707" y="370" width="5" height="119" fill="#72bd67"/><rect x="708.65" y="371.70" width="1.7" height="115.60" fill="#47933d"/><rect x="715" y="370" width="5" height="119" fill="#72bd67"/><rect x="716.65" y="371.70" width="1.7" height="115.60" fill="#47933d"/><rect x="723" y="370" width="5" height="119" fill="#72bd67"/><rect x="724.65" y="371.70" width="1.7" height="115.60" fill="#47933d"/><rect x="731" y="370" width="5" height="119" fill="#72bd67"/><rect x="732.65" y="371.70" width="1.7" height="115.60" fill="#47933d"/><rect x="739" y="370" width="5" height="119" fill="#72bd67"/><rect x="740.65" y="371.70" width="1.7" height="115.60" fill="#47933d"/><rect x="747" y="370" width="5" height="119" fill="#72bd67"/><rect x="748.65" y="371.70" width="1.7" height="115.60" fill="#47933d"/><rect x="755" y="370" width="5" height="119" fill="#72bd67"/><rect x="756.65" y="371.70" width="1.7" height="115.60" fill="#47933d"/><rect x="763" y="370" width="5" height="119" fill="#72bd67"/><rect x="764.65" y="371.70" width="1.7" height="115.60" fill="#47933d"/><rect x="771" y="370" width="5" height="119" fill="#72bd67"/><rect x="772.65" y="371.70" width="1.7" height="115.60" fill="#47933d"/><rect x="779" y="370" width="5" height="119" fill="#72bd67"/><rect x="780.65" y="371.70" width="1.7" height="115.60" fill="#47933d"/><rect x="787" y="370" width="5" height="119" fill="#72bd67"/><rect x="788.65" y="371.70" width="1.7" height="115.60" fill="#47933d"/><rect x="795" y="370" width="5" height="119" fill="#72bd67"/><rect x="796.65" y="371.70" width="1.7" height="115.60" fill="#47933d"/><rect x="803" y="370" width="5" height="119" fill="#72bd67"/><rect x="804.65" y="371.70" width="1.7" height="115.60" fill="#47933d"/><rect x="812" y="370" width="5" height="119" fill="#72bd67"/><rect x="813.65" y="371.70" width="1.7" height="115.60" fill="#47933d"/><rect x="820" y="370" width="5" height="119" fill="#72bd67"/><rect x="821.65" y="371.70" width="1.7" height="115.60" fill="#47933d"/><rect x="828" y="370" width="5" height="119" fill="#72bd67"/><rect x="829.65" y="371.70" width="1.7" height="115.60" fill="#47933d"/><rect x="836" y="370" width="5" height="119" fill="#72bd67"/><rect x="837.65" y="371.70" width="1.7" height="115.60" fill="#47933d"/><rect x="844" y="370" width="5" height="119" fill="#72bd67"/><rect x="845.65" y="371.70" width="1.7" height="115.60" fill="#47933d"/><rect x="852" y="370" width="5" height="119" fill="#72bd67"/><rect x="853.65" y="371.70" width="1.7" height="115.60" fill="#47933d"/><rect x="860" y="370" width="5" height="119" fill="#72bd67"/><rect x="861.65" y="371.70" width="1.7" height="115.60" fill="#47933d"/><rect x="868" y="370" width="5" height="119" fill="#72bd67"/><rect x="869.65" y="371.70" width="1.7" height="115.60" fill="#47933d"/><rect x="876" y="370" width="5" height="119" fill="#72bd67"/><rect x="877.65" y="371.70" width="1.7" height="115.60" fill="#47933d"/><rect x="884" y="370" width="5" height="119" fill="#72bd67"/><rect x="885.65" y="371.70" width="1.7" height="115.60" fill="#47933d"/><rect x="892" y="370" width="5" height="119" fill="#72bd67"/><rect x="893.65" y="371.70" width="1.7" height="115.60" fill="#47933d"/><rect x="900" y="370" width="5" height="119" fill="#72bd67"/><rect x="901.65" y="371.70" width="1.7" height="115.60" fill="#47933d"/><rect x="908" y="370" width="5" height="119" fill="#72bd67"/><rect x="909.65" y="371.70" width="1.7" height="115.60" fill="#47933d"/><rect x="916" y="370" width="5" height="119" fill="#72bd67"/><rect x="917.65" y="371.70" width="1.7" height="115.60" fill="#47933d"/><rect x="925" y="370" width="5" height="119" fill="#72bd67"/><rect x="926.65" y="371.70" width="1.7" height="115.60" fill="#47933d"/><rect x="933" y="370" width="5" height="119" fill="#72bd67"/><rect x="934.65" y="371.70" width="1.7" height="115.60" fill="#47933d"/><rect x="941" y="370" width="5" height="119" fill="#72bd67"/><rect x="942.65" y="371.70" width="1.7" height="115.60" fill="#47933d"/><rect x="949" y="370" width="5" height="119" fill="#72bd67"/><rect x="950.65" y="371.70" width="1.7" height="115.60" fill="#47933d"/><rect x="957" y="370" width="5" height="119" fill="#72bd67"/><rect x="958.65" y="371.70" width="1.7" height="115.60" fill="#47933d"/><rect x="965" y="370" width="5" height="119" fill="#72bd67"/><rect x="966.65" y="371.70" width="1.7" height="115.60" fill="#47933d"/><rect x="973" y="370" width="5" height="119" fill="#72bd67"/><rect x="974.65" y="371.70" width="1.7" height="115.60" fill="#47933d"/><rect x="981" y="370" width="5" height="119" fill="#72bd67"/><rect x="982.65" y="371.70" width="1.7" height="115.60" fill="#47933d"/><rect x="989" y="370" width="5" height="119" fill="#72bd67"/><rect x="990.65" y="371.70" width="1.7" height="115.60" fill="#47933d"/><rect x="997" y="370" width="5" height="119" fill="#72bd67"/><rect x="998.65" y="371.70" width="1.7" height="115.60" fill="#47933d"/><rect x="1005" y="370" width="5" height="119" fill="#72bd67"/><rect x="1006.65" y="371.70" width="1.7" height="115.60" fill="#47933d"/><rect x="1013" y="370" width="5" height="119" fill="#72bd67"/><rect x="1014.65" y="371.70" width="1.7" height="115.60" fill="#47933d"/><rect x="1021" y="370" width="5" height="119" fill="#72bd67"/><rect x="1022.65" y="371.70" width="1.7" height="115.60" fill="#47933d"/><rect x="1029" y="370" width="5" height="119" fill="#72bd67"/><rect x="1030.65" y="371.70" width="1.7" height="115.60" fill="#47933d"/><rect x="1038" y="370" width="5" height="119" fill="#72bd67"/><rect x="1039.65" y="371.70" width="1.7" height="115.60" fill="#47933d"/><rect x="1046" y="370" width="5" height="119" fill="#72bd67"/><rect x="1047.65" y="371.70" width="1.7" height="115.60" fill="#47933d"/><rect x="1054" y="370" width="5" height="119" fill="#72bd67"/><rect x="1055.65" y="371.70" width="1.7" height="115.60" fill="#47933d"/><rect x="1062" y="370" width="5" height="119" fill="#e6495c"/><rect x="1063.65" y="371.70" width="1.7" height="115.60" fill="#c0283e"/><rect x="1070" y="370" width="5" height="119" fill="#72bd67"/><rect x="1071.65" y="371.70" width="1.7" height="115.60" fill="#47933d"/><rect x="1078" y="370" width="5" height="119" fill="#72bd67"/><rect x="1079.65" y="371.70" width="1.7" height="115.60" fill="#47933d"/><rect x="1086" y="370" width="5" height="119" fill="#72bd67"/><rect x="1087.65" y="371.70" width="1.7" height="115.60" fill="#47933d"/><rect x="1094" y="370" width="5" height="119" fill="#72bd67"/><rect x="1095.65" y="371.70" width="1.7" height="115.60" fill="#47933d"/><rect x="1102" y="370" width="5" height="119" fill="#72bd67"/><rect x="1103.65" y="371.70" width="1.7" height="115.60" fill="#47933d"/><rect x="1110" y="370" width="5" height="119" fill="#72bd67"/><rect x="1111.65" y="371.70" width="1.7" height="115.60" fill="#47933d"/><rect x="1118" y="370" width="5" height="119" fill="#72bd67"/><rect x="1119.65" y="371.70" width="1.7" height="115.60" fill="#47933d"/><rect x="1126" y="370" width="5" height="119" fill="#72bd67"/><rect x="1127.65" y="371.70" width="1.7" height="115.60" fill="#47933d"/><rect x="1134" y="370" width="5" height="119" fill="#72bd67"/><rect x="1135.65" y="371.70" width="1.7" height="115.60" fill="#47933d"/><rect x="1142" y="370" width="5" height="119" fill="#72bd67"/><rect x="1143.65" y="371.70" width="1.7" height="115.60" fill="#47933d"/><rect x="1151" y="370" width="5" height="119" fill="#72bd67"/><rect x="1152.65" y="371.70" width="1.7" height="115.60" fill="#47933d"/><rect x="1159" y="370" width="5" height="119" fill="#72bd67"/><rect x="1160.65" y="371.70" width="1.7" height="115.60" fill="#47933d"/><rect x="1167" y="370" width="5" height="119" fill="#72bd67"/><rect x="1168.65" y="371.70" width="1.7" height="115.60" fill="#47933d"/><rect x="1175" y="370" width="5" height="119" fill="#72bd67"/><rect x="1176.65" y="371.70" width="1.7" height="115.60" fill="#47933d"/><rect x="1183" y="370" width="5" height="119" fill="#72bd67"/><rect x="1184.65" y="371.70" width="1.7" height="115.60" fill="#47933d"/><rect x="1191" y="370" width="5" height="119" fill="#72bd67"/><rect x="1192.65" y="371.70" width="1.7" height="115.60" fill="#47933d"/><rect x="1199" y="370" width="5" height="119" fill="#72bd67"/><rect x="1200.65" y="371.70" width="1.7" height="115.60" fill="#47933d"/><rect x="1207" y="370" width="5" height="119" fill="#72bd67"/><rect x="1208.65" y="371.70" width="1.7" height="115.60" fill="#47933d"/><rect x="1215" y="370" width="5" height="119" fill="#72bd67"/><rect x="1216.65" y="371.70" width="1.7" height="115.60" fill="#47933d"/><rect x="1223" y="370" width="5" height="119" fill="#72bd67"/><rect x="1224.65" y="371.70" width="1.7" height="115.60" fill="#47933d"/><rect x="1231" y="370" width="5" height="119" fill="#72bd67"/><rect x="1232.65" y="371.70" width="1.7" height="115.60" fill="#47933d"/><rect x="1239" y="370" width="5" height="119" fill="#72bd67"/><rect x="1240.65" y="371.70" width="1.7" height="115.60" fill="#47933d"/><rect x="1247" y="370" width="5" height="119" fill="#72bd67"/><rect x="1248.65" y="371.70" width="1.7" height="115.60" fill="#47933d"/><rect x="1255" y="370" width="5" height="119" fill="#72bd67"/><rect x="1256.65" y="371.70" width="1.7" height="115.60" fill="#47933d"/><rect x="1263" y="370" width="5" height="119" fill="#72bd67"/><rect x="1264.65" y="371.70" width="1.7" height="115.60" fill="#47933d"/><rect x="1272" y="370" width="5" height="119" fill="#72bd67"/><rect x="1273.65" y="371.70" width="1.7" height="115.60" fill="#47933d"/><rect x="1280" y="370" width="5" height="119" fill="#72bd67"/><rect x="1281.65" y="371.70" width="1.7" height="115.60" fill="#47933d"/><rect x="1288" y="370" width="5" height="119" fill="#72bd67"/><rect x="1289.65" y="371.70" width="1.7" height="115.60" fill="#47933d"/><rect x="1296" y="370" width="5" height="119" fill="#72bd67"/><rect x="1297.65" y="371.70" width="1.7" height="115.60" fill="#47933d"/></g>
<text x="202.75" y="525.10" font-size="25.58" textLength="61.11" lengthAdjust="spacingAndGlyphs" fill="#ccccdc">04:20</text>
<text x="299.62" y="525.10" font-size="25.58" textLength="61.11" lengthAdjust="spacingAndGlyphs" fill="#ccccdc">05:20</text>
<text x="396.50" y="525.10" font-size="25.58" textLength="61.11" lengthAdjust="spacingAndGlyphs" fill="#ccccdc">06:20</text>
<text x="493.37" y="525.10" font-size="25.58" textLength="61.11" lengthAdjust="spacingAndGlyphs" fill="#ccccdc">07:20</text>
<text x="590.25" y="525.10" font-size="25.58" textLength="61.11" lengthAdjust="spacingAndGlyphs" fill="#ccccdc">08:20</text>
<text x="687.12" y="525.10" font-size="25.58" textLength="61.11" lengthAdjust="spacingAndGlyphs" fill="#ccccdc">09:20</text>
<text x="783.06" y="525.10" font-size="25.58" textLength="62.06" lengthAdjust="spacingAndGlyphs" fill="#ccccdc">10:20</text>
<text x="879.94" y="525.10" font-size="25.58" textLength="62.06" lengthAdjust="spacingAndGlyphs" fill="#ccccdc">11:20</text>
<text x="976.81" y="525.10" font-size="25.58" textLength="62.06" lengthAdjust="spacingAndGlyphs" fill="#ccccdc">12:20</text>
<text x="1073.69" y="525.10" font-size="25.58" textLength="62.06" lengthAdjust="spacingAndGlyphs" fill="#ccccdc">13:20</text>
<text x="1170.56" y="525.10" font-size="25.58" textLength="62.06" lengthAdjust="spacingAndGlyphs" fill="#ccccdc">14:20</text>
<text x="1267.44" y="525.10" font-size="25.58" textLength="62.06" lengthAdjust="spacingAndGlyphs" fill="#ccccdc">15:20</text>
<rect x="1387.00" y="110.00" width="1350.00" height="438.00" rx="4" fill="#16171b" stroke="#1f2024" stroke-width="2"/>
<text x="1976.13" y="151.55" font-size="28.49" textLength="170.72" lengthAdjust="spacingAndGlyphs" fill="#ccccdc" stroke="#ccccdc" stroke-width="0.90" stroke-linejoin="round">Total Request</text>
<line x1="1428" y1="239.4" x2="2670" y2="239.4" stroke="rgba(204,204,220,0.055)" stroke-width="2"/>
<text x="1403.68" y="245.60" font-size="24.13" textLength="15.01" lengthAdjust="spacingAndGlyphs" fill="#ccccdc">4</text>
<line x1="1428" y1="343.3" x2="2670" y2="343.3" stroke="rgba(204,204,220,0.055)" stroke-width="2"/>
<text x="1402.80" y="349.50" font-size="24.13" textLength="16.60" lengthAdjust="spacingAndGlyphs" fill="#ccccdc">2</text>
<line x1="1428" y1="445.0" x2="2670" y2="445.0" stroke="rgba(204,204,220,0.055)" stroke-width="2"/>
<text x="1403.19" y="451.20" font-size="24.13" textLength="15.82" lengthAdjust="spacingAndGlyphs" fill="#ccccdc">0</text>
<line x1="1501.20" y1="226" x2="1501.20" y2="453" stroke="rgba(204,204,220,0.055)" stroke-width="2"/>
<text x="1470.59" y="481.10" font-size="25.87" textLength="61.21" lengthAdjust="spacingAndGlyphs" fill="#ccccdc">04:00</text>
<line x1="1604.06" y1="226" x2="1604.06" y2="453" stroke="rgba(204,204,220,0.055)" stroke-width="2"/>
<text x="1573.45" y="481.10" font-size="25.87" textLength="61.21" lengthAdjust="spacingAndGlyphs" fill="#ccccdc">05:00</text>
<line x1="1706.92" y1="226" x2="1706.92" y2="453" stroke="rgba(204,204,220,0.055)" stroke-width="2"/>
<text x="1676.31" y="481.10" font-size="25.87" textLength="61.21" lengthAdjust="spacingAndGlyphs" fill="#ccccdc">06:00</text>
<line x1="1809.78" y1="226" x2="1809.78" y2="453" stroke="rgba(204,204,220,0.055)" stroke-width="2"/>
<text x="1779.17" y="481.10" font-size="25.87" textLength="61.21" lengthAdjust="spacingAndGlyphs" fill="#ccccdc">07:00</text>
<line x1="1912.64" y1="226" x2="1912.64" y2="453" stroke="rgba(204,204,220,0.055)" stroke-width="2"/>
<text x="1882.03" y="481.10" font-size="25.87" textLength="61.21" lengthAdjust="spacingAndGlyphs" fill="#ccccdc">08:00</text>
<line x1="2015.50" y1="226" x2="2015.50" y2="453" stroke="rgba(204,204,220,0.055)" stroke-width="2"/>
<text x="1984.89" y="481.10" font-size="25.87" textLength="61.21" lengthAdjust="spacingAndGlyphs" fill="#ccccdc">09:00</text>
<line x1="2118.36" y1="226" x2="2118.36" y2="453" stroke="rgba(204,204,220,0.055)" stroke-width="2"/>
<text x="2086.82" y="481.10" font-size="25.87" textLength="62.16" lengthAdjust="spacingAndGlyphs" fill="#ccccdc">10:00</text>
<line x1="2221.22" y1="226" x2="2221.22" y2="453" stroke="rgba(204,204,220,0.055)" stroke-width="2"/>
<text x="2189.68" y="481.10" font-size="25.87" textLength="62.16" lengthAdjust="spacingAndGlyphs" fill="#ccccdc">11:00</text>
<line x1="2324.08" y1="226" x2="2324.08" y2="453" stroke="rgba(204,204,220,0.055)" stroke-width="2"/>
<text x="2292.54" y="481.10" font-size="25.87" textLength="62.16" lengthAdjust="spacingAndGlyphs" fill="#ccccdc">12:00</text>
<line x1="2426.94" y1="226" x2="2426.94" y2="453" stroke="rgba(204,204,220,0.055)" stroke-width="2"/>
<text x="2395.40" y="481.10" font-size="25.87" textLength="62.16" lengthAdjust="spacingAndGlyphs" fill="#ccccdc">13:00</text>
<line x1="2529.80" y1="226" x2="2529.80" y2="453" stroke="rgba(204,204,220,0.055)" stroke-width="2"/>
<text x="2498.26" y="481.10" font-size="25.87" textLength="62.16" lengthAdjust="spacingAndGlyphs" fill="#ccccdc">14:00</text>
<line x1="2632.66" y1="226" x2="2632.66" y2="453" stroke="rgba(204,204,220,0.055)" stroke-width="2"/>
<text x="2601.12" y="481.10" font-size="25.87" textLength="62.16" lengthAdjust="spacingAndGlyphs" fill="#ccccdc">15:00</text>
<path d="M1436.10 239.60 L1440.15 239.60 L1441.90 343.30 L1443.65 239.60 L1479.95 239.60 L1481.70 343.30 L1483.45 239.60 L1522.85 239.60 L1524.60 343.30 L1526.35 239.60 L1600.05 239.60 L1601.80 343.30 L1603.55 239.60 L1633.95 239.60 L1635.70 343.30 L1637.45 239.60 L1740.25 239.60 L1742.00 343.30 L1743.75 239.60 L1776.25 239.60 L1778.00 343.30 L1779.75 239.60 L1951.25 239.60 L1953.00 343.30 L1954.75 239.60 L2002.05 239.60 L2003.80 343.30 L2005.55 239.60 L2241.05 239.60 L2242.80 343.30 L2244.55 239.60 L2323.05 239.60 L2324.80 343.30 L2326.55 239.60 L2341.95 239.60 L2343.70 343.30 L2345.45 239.60 L2506.15 239.60 L2507.90 343.30 L2509.65 239.60 L2592.05 239.60 L2593.80 343.30 L2595.55 239.60 L2650.25 239.60 L2652.00 343.30 L2653.75 239.60 L2668.80 239.60" fill="none" stroke="#73bf69" stroke-width="2" stroke-linejoin="round"/>
<path d="M1436.10 239.60 L1457.05 239.60 L1458.80 343.30 L1460.55 239.60 L1500.15 239.60 L1501.90 343.30 L1503.65 239.60 L1543.05 239.60 L1544.80 343.30 L1546.55 239.60 L1586.05 239.60 L1587.80 343.30 L1589.55 239.60 L1612.05 239.60 L1613.80 343.30 L1615.55 239.60 L1654.95 239.60 L1656.70 343.30 L1658.45 239.60 L1696.85 239.60 L1698.60 343.30 L1700.35 239.60 L1717.45 239.60 L1719.20 343.30 L1720.95 239.60 L1761.15 239.60 L1762.90 343.30 L1764.65 239.60 L1797.25 239.60 L1799.00 343.30 L1800.75 239.60 L1839.85 239.60 L1841.60 343.30 L1843.35 239.60 L1860.15 239.60 L1861.90 343.30 L1863.65 239.60 L1900.05 239.60 L1901.80 343.30 L1903.55 239.60 L1910.05 239.60 L1911.80 343.30 L1913.55 239.60 L1930.05 239.60 L1931.80 343.30 L1933.55 239.60 L1941.05 239.60 L1942.80 343.30 L1944.55 239.60 L1970.25 239.60 L1972.00 343.30 L1973.75 239.60 L1980.25 239.60 L1982.00 343.30 L1983.75 239.60 L2012.95 239.60 L2014.70 343.30 L2016.45 239.60 L2023.15 239.60 L2024.90 343.30 L2026.65 239.60 L2066.05 239.60 L2067.80 343.30 L2069.55 239.60 L2100.05 239.60 L2101.80 343.30 L2103.55 239.60 L2120.85 239.60 L2122.60 343.30 L2124.35 239.60 L2141.05 239.60 L2142.80 343.30 L2144.55 239.60 L2162.15 239.60 L2163.90 343.30 L2165.65 239.60 L2181.15 239.60 L2182.90 343.30 L2184.65 239.60 L2261.25 239.60 L2263.00 343.30 L2264.75 239.60 L2281.95 239.60 L2283.70 343.30 L2285.45 239.60 L2302.15 239.60 L2303.90 343.30 L2305.65 239.60 L2381.15 239.60 L2382.90 343.30 L2384.65 239.60 L2421.05 239.60 L2422.80 343.30 L2424.55 239.60 L2441.05 239.60 L2442.80 343.30 L2444.55 239.60 L2481.05 239.60 L2482.80 343.30 L2484.55 239.60 L2494.05 239.60 L2495.80 343.30 L2497.55 239.60 L2566.15 239.60 L2567.90 343.30 L2569.65 239.60 L2577.15 239.60 L2578.90 343.30 L2580.65 239.60 L2602.25 239.60 L2604.00 343.30 L2605.75 239.60 L2668.80 239.60" fill="none" stroke="#f2cc0c" stroke-width="2" stroke-linejoin="round"/>
<rect x="1436.00" y="509.00" width="28.00" height="8.00" rx="2.2" fill="#73bf69"/>
<text x="1478.96" y="520.70" font-size="24.71" textLength="64.82" lengthAdjust="spacingAndGlyphs" fill="#ccccdc">Direct</text>
<rect x="1564.30" y="509.00" width="28.00" height="8.00" rx="2.2" fill="#f2cc0c"/>
<text x="1607.33" y="520.70" font-size="24.71" textLength="61.31" lengthAdjust="spacingAndGlyphs" fill="#ccccdc">Proxy</text>
<rect x="19.00" y="566.00" width="1350.00" height="438.00" rx="4" fill="#16171b" stroke="#1f2024" stroke-width="2"/>
<text x="589.04" y="607.75" font-size="28.49" textLength="209.81" lengthAdjust="spacingAndGlyphs" fill="#ccccdc" stroke="#ccccdc" stroke-width="0.90" stroke-linejoin="round">Total Error Count</text>
<line x1="61" y1="681.6" x2="1302.5" y2="681.6" stroke="rgba(204,204,220,0.055)" stroke-width="2"/>
<text x="35.40" y="687.60" font-size="24.13" textLength="14.55" lengthAdjust="spacingAndGlyphs" fill="#ccccdc">3</text>
<line x1="61" y1="754.1" x2="1302.5" y2="754.1" stroke="rgba(204,204,220,0.055)" stroke-width="2"/>
<text x="35.03" y="760.10" font-size="24.13" textLength="15.14" lengthAdjust="spacingAndGlyphs" fill="#ccccdc">2</text>
<line x1="61" y1="828.2" x2="1302.5" y2="828.2" stroke="rgba(204,204,220,0.055)" stroke-width="2"/>
<text x="34.21" y="834.20" font-size="24.13" textLength="16.00" lengthAdjust="spacingAndGlyphs" fill="#ccccdc">1</text>
<line x1="61" y1="900.5" x2="1302.5" y2="900.5" stroke="rgba(204,204,220,0.055)" stroke-width="2"/>
<text x="35.39" y="906.50" font-size="24.13" textLength="14.43" lengthAdjust="spacingAndGlyphs" fill="#ccccdc">0</text>
<line x1="133.30" y1="681.6" x2="133.30" y2="909" stroke="rgba(204,204,220,0.055)" stroke-width="2"/>
<text x="102.75" y="937.60" font-size="26.16" textLength="61.11" lengthAdjust="spacingAndGlyphs" fill="#ccccdc">04:00</text>
<line x1="236.13" y1="681.6" x2="236.13" y2="909" stroke="rgba(204,204,220,0.055)" stroke-width="2"/>
<text x="205.58" y="937.60" font-size="26.16" textLength="61.11" lengthAdjust="spacingAndGlyphs" fill="#ccccdc">05:00</text>
<line x1="338.96" y1="681.6" x2="338.96" y2="909" stroke="rgba(204,204,220,0.055)" stroke-width="2"/>
<text x="308.41" y="937.60" font-size="26.16" textLength="61.11" lengthAdjust="spacingAndGlyphs" fill="#ccccdc">06:00</text>
<line x1="441.79" y1="681.6" x2="441.79" y2="909" stroke="rgba(204,204,220,0.055)" stroke-width="2"/>
<text x="411.24" y="937.60" font-size="26.16" textLength="61.11" lengthAdjust="spacingAndGlyphs" fill="#ccccdc">07:00</text>
<line x1="544.62" y1="681.6" x2="544.62" y2="909" stroke="rgba(204,204,220,0.055)" stroke-width="2"/>
<text x="514.07" y="937.60" font-size="26.16" textLength="61.11" lengthAdjust="spacingAndGlyphs" fill="#ccccdc">08:00</text>
<line x1="647.45" y1="681.6" x2="647.45" y2="909" stroke="rgba(204,204,220,0.055)" stroke-width="2"/>
<text x="616.90" y="937.60" font-size="26.16" textLength="61.11" lengthAdjust="spacingAndGlyphs" fill="#ccccdc">09:00</text>
<line x1="750.28" y1="681.6" x2="750.28" y2="909" stroke="rgba(204,204,220,0.055)" stroke-width="2"/>
<text x="718.79" y="937.60" font-size="26.16" textLength="62.06" lengthAdjust="spacingAndGlyphs" fill="#ccccdc">10:00</text>
<line x1="853.11" y1="681.6" x2="853.11" y2="909" stroke="rgba(204,204,220,0.055)" stroke-width="2"/>
<text x="821.62" y="937.60" font-size="26.16" textLength="62.06" lengthAdjust="spacingAndGlyphs" fill="#ccccdc">11:00</text>
<line x1="955.94" y1="681.6" x2="955.94" y2="909" stroke="rgba(204,204,220,0.055)" stroke-width="2"/>
<text x="924.45" y="937.60" font-size="26.16" textLength="62.06" lengthAdjust="spacingAndGlyphs" fill="#ccccdc">12:00</text>
<line x1="1058.77" y1="681.6" x2="1058.77" y2="909" stroke="rgba(204,204,220,0.055)" stroke-width="2"/>
<text x="1027.28" y="937.60" font-size="26.16" textLength="62.06" lengthAdjust="spacingAndGlyphs" fill="#ccccdc">13:00</text>
<line x1="1161.60" y1="681.6" x2="1161.60" y2="909" stroke="rgba(204,204,220,0.055)" stroke-width="2"/>
<text x="1130.11" y="937.60" font-size="26.16" textLength="62.06" lengthAdjust="spacingAndGlyphs" fill="#ccccdc">14:00</text>
<line x1="1264.43" y1="681.6" x2="1264.43" y2="909" stroke="rgba(204,204,220,0.055)" stroke-width="2"/>
<text x="1232.94" y="937.60" font-size="26.16" textLength="62.06" lengthAdjust="spacingAndGlyphs" fill="#ccccdc">15:00</text>
<path d="M68.30 900.50 L910.09 900.50 L911.80 803.17 L913.51 900.50 L1301.40 900.50" fill="none" stroke="#73bf69" stroke-width="2" stroke-linejoin="round"/>
<path d="M68.30 900.50 L72.39 900.50 L74.10 803.17 L75.81 900.50 L91.19 900.50 L92.90 803.17 L94.61 900.50 L247.14 900.50 L248.85 803.17 L250.55 803.17 L252.26 900.50 L553.99 900.50 L555.70 705.83 L557.41 900.50 L643.29 900.50 L645.00 803.17 L646.71 900.50 L1047.24 900.50 L1048.95 803.17 L1050.65 803.17 L1052.36 900.50 L1301.40 900.50" fill="none" stroke="#f2cc0c" stroke-width="2" stroke-linejoin="round"/>
<rect x="68.00" y="965.00" width="28.00" height="8.00" rx="2.2" fill="#73bf69"/>
<text x="110.96" y="976.70" font-size="24.71" textLength="64.82" lengthAdjust="spacingAndGlyphs" fill="#ccccdc">Direct</text>
<rect x="196.30" y="965.00" width="28.00" height="8.00" rx="2.2" fill="#f2cc0c"/>
<text x="239.33" y="976.70" font-size="24.71" textLength="61.31" lengthAdjust="spacingAndGlyphs" fill="#ccccdc">Proxy</text>
<rect x="1387.00" y="566.00" width="1350.00" height="438.00" rx="4" fill="#16171b" stroke="#1f2024" stroke-width="2"/>
<text x="2002.80" y="607.55" font-size="28.49" textLength="117.66" lengthAdjust="spacingAndGlyphs" fill="#ccccdc" stroke="#ccccdc" stroke-width="0.90" stroke-linejoin="round">Timecost</text>
<line x1="1493.8" y1="696.5" x2="2670.5" y2="696.5" stroke="rgba(204,204,220,0.055)" stroke-width="2"/>
<text x="1403.74" y="702.10" font-size="24.42" textLength="80.14" lengthAdjust="spacingAndGlyphs" fill="#ccccdc">400 ms</text>
<line x1="1493.8" y1="799.1" x2="2670.5" y2="799.1" stroke="rgba(204,204,220,0.055)" stroke-width="2"/>
<text x="1403.06" y="804.70" font-size="24.42" textLength="80.83" lengthAdjust="spacingAndGlyphs" fill="#ccccdc">200 ms</text>
<line x1="1493.8" y1="901.7" x2="2670.5" y2="901.7" stroke="rgba(204,204,220,0.055)" stroke-width="2"/>
<text x="1450.83" y="907.30" font-size="24.42" textLength="33.06" lengthAdjust="spacingAndGlyphs" fill="#ccccdc">0 s</text>
<line x1="1563.50" y1="682.4" x2="1563.50" y2="909" stroke="rgba(204,204,220,0.055)" stroke-width="2"/>
<text x="1532.95" y="936.90" font-size="25.44" textLength="61.11" lengthAdjust="spacingAndGlyphs" fill="#ccccdc">04:00</text>
<line x1="1660.89" y1="682.4" x2="1660.89" y2="909" stroke="rgba(204,204,220,0.055)" stroke-width="2"/>
<text x="1630.34" y="936.90" font-size="25.44" textLength="61.11" lengthAdjust="spacingAndGlyphs" fill="#ccccdc">05:00</text>
<line x1="1758.28" y1="682.4" x2="1758.28" y2="909" stroke="rgba(204,204,220,0.055)" stroke-width="2"/>
<text x="1727.73" y="936.90" font-size="25.44" textLength="61.11" lengthAdjust="spacingAndGlyphs" fill="#ccccdc">06:00</text>
<line x1="1855.67" y1="682.4" x2="1855.67" y2="909" stroke="rgba(204,204,220,0.055)" stroke-width="2"/>
<text x="1825.12" y="936.90" font-size="25.44" textLength="61.11" lengthAdjust="spacingAndGlyphs" fill="#ccccdc">07:00</text>
<line x1="1953.06" y1="682.4" x2="1953.06" y2="909" stroke="rgba(204,204,220,0.055)" stroke-width="2"/>
<text x="1922.51" y="936.90" font-size="25.44" textLength="61.11" lengthAdjust="spacingAndGlyphs" fill="#ccccdc">08:00</text>
<line x1="2050.45" y1="682.4" x2="2050.45" y2="909" stroke="rgba(204,204,220,0.055)" stroke-width="2"/>
<text x="2019.90" y="936.90" font-size="25.44" textLength="61.11" lengthAdjust="spacingAndGlyphs" fill="#ccccdc">09:00</text>
<line x1="2147.84" y1="682.4" x2="2147.84" y2="909" stroke="rgba(204,204,220,0.055)" stroke-width="2"/>
<text x="2116.35" y="936.90" font-size="25.44" textLength="62.06" lengthAdjust="spacingAndGlyphs" fill="#ccccdc">10:00</text>
<line x1="2245.23" y1="682.4" x2="2245.23" y2="909" stroke="rgba(204,204,220,0.055)" stroke-width="2"/>
<text x="2213.74" y="936.90" font-size="25.44" textLength="62.06" lengthAdjust="spacingAndGlyphs" fill="#ccccdc">11:00</text>
<line x1="2342.62" y1="682.4" x2="2342.62" y2="909" stroke="rgba(204,204,220,0.055)" stroke-width="2"/>
<text x="2311.13" y="936.90" font-size="25.44" textLength="62.06" lengthAdjust="spacingAndGlyphs" fill="#ccccdc">12:00</text>
<line x1="2440.01" y1="682.4" x2="2440.01" y2="909" stroke="rgba(204,204,220,0.055)" stroke-width="2"/>
<text x="2408.52" y="936.90" font-size="25.44" textLength="62.06" lengthAdjust="spacingAndGlyphs" fill="#ccccdc">13:00</text>
<line x1="2537.40" y1="682.4" x2="2537.40" y2="909" stroke="rgba(204,204,220,0.055)" stroke-width="2"/>
<text x="2505.91" y="936.90" font-size="25.44" textLength="62.06" lengthAdjust="spacingAndGlyphs" fill="#ccccdc">14:00</text>
<line x1="2634.79" y1="682.4" x2="2634.79" y2="909" stroke="rgba(204,204,220,0.055)" stroke-width="2"/>
<text x="2603.30" y="936.90" font-size="25.44" textLength="62.06" lengthAdjust="spacingAndGlyphs" fill="#ccccdc">15:00</text>
<path d="M1502.20 883.02 L1503.82 884.30 L1505.45 882.94 L1507.07 883.95 L1508.69 883.03 L1510.32 882.97 L1511.94 885.23 L1513.56 884.79 L1515.18 886.06 L1516.81 883.77 L1518.43 884.08 L1520.05 884.12 L1521.68 881.79 L1523.30 884.55 L1524.92 884.53 L1526.55 883.19 L1528.17 883.54 L1529.79 883.25 L1531.41 885.53 L1533.04 883.96 L1534.66 884.08 L1536.28 884.66 L1537.91 882.74 L1539.53 884.91 L1541.15 884.02 L1542.78 883.98 L1544.40 881.80 L1546.02 884.42 L1547.64 883.05 L1549.27 882.99 L1550.89 882.98 L1552.51 885.79 L1554.14 884.01 L1555.76 884.37 L1557.38 884.45 L1559.01 884.92 L1560.63 883.95 L1562.25 883.58 L1563.87 883.51 L1565.50 884.26 L1567.12 884.22 L1568.74 883.36 L1570.37 882.76 L1571.99 884.97 L1573.61 884.55 L1575.24 883.96 L1576.86 883.68 L1578.48 884.59 L1580.10 883.48 L1581.73 883.70 L1583.35 882.06 L1584.97 884.59 L1586.60 884.34 L1588.22 883.62 L1589.84 884.25 L1591.47 883.45 L1593.09 884.49 L1594.71 883.81 L1596.33 883.33 L1597.96 880.07 L1599.58 884.09 L1601.20 885.25 L1602.83 883.45 L1604.45 883.62 L1606.07 884.52 L1607.70 884.24 L1609.32 883.51 L1610.94 883.57 L1612.56 884.63 L1614.19 884.07 L1615.81 884.34 L1617.43 884.69 L1619.06 882.91 L1620.68 885.28 L1622.30 883.62 L1623.93 881.48 L1625.55 885.05 L1627.17 880.56 L1628.79 882.71 L1630.42 884.14 L1632.04 884.90 L1633.66 884.46 L1635.29 883.90 L1636.91 882.76 L1638.53 883.27 L1640.16 884.98 L1641.78 882.77 L1643.40 884.70 L1645.02 883.44 L1646.65 883.44 L1648.27 885.00 L1649.89 884.55 L1651.52 883.89 L1653.14 883.21 L1654.76 882.58 L1656.39 884.56 L1658.01 885.07 L1659.63 884.20 L1661.25 883.70 L1662.88 883.11 L1664.50 884.00 L1666.12 884.12 L1667.75 884.14 L1669.37 884.47 L1670.99 882.42 L1672.62 884.60 L1674.24 884.27 L1675.86 884.81 L1676.70 880.00 L1679.11 883.46 L1680.73 884.61 L1682.35 884.71 L1683.98 883.53 L1685.60 882.10 L1687.22 883.39 L1688.85 884.20 L1690.47 883.34 L1692.09 883.34 L1693.71 884.87 L1695.34 880.66 L1696.96 885.21 L1698.58 884.32 L1700.21 884.04 L1701.83 883.85 L1703.45 885.49 L1705.08 884.23 L1706.70 885.08 L1708.32 884.33 L1709.94 883.18 L1711.57 882.80 L1713.19 884.28 L1714.81 882.42 L1716.44 883.89 L1718.06 883.51 L1719.68 883.68 L1721.31 883.08 L1722.93 882.89 L1724.55 884.88 L1726.17 885.17 L1727.80 883.47 L1729.42 882.76 L1731.04 882.75 L1732.67 885.04 L1734.29 883.02 L1735.91 883.69 L1737.54 883.56 L1739.16 883.20 L1740.78 883.01 L1742.40 886.19 L1744.03 883.73 L1745.65 883.25 L1747.27 885.59 L1748.90 884.75 L1750.52 884.43 L1752.14 883.81 L1753.77 884.02 L1755.39 884.15 L1757.01 883.53 L1758.63 884.29 L1760.26 884.35 L1761.88 884.66 L1763.50 882.97 L1765.13 884.32 L1766.75 883.89 L1768.37 883.68 L1770.00 885.25 L1771.62 884.57 L1773.24 883.15 L1774.86 884.97 L1776.49 882.58 L1778.11 884.96 L1779.73 883.81 L1781.36 883.08 L1782.98 880.35 L1784.60 883.19 L1786.23 883.92 L1787.85 882.78 L1789.47 884.07 L1791.09 882.28 L1792.72 885.03 L1794.34 883.59 L1795.96 884.07 L1797.59 884.74 L1800.00 880.00 L1800.83 882.66 L1802.46 882.77 L1804.08 884.52 L1805.70 884.07 L1807.32 883.67 L1808.95 884.67 L1810.57 883.95 L1812.19 883.59 L1813.82 884.32 L1815.44 884.93 L1817.06 883.16 L1818.69 884.51 L1820.31 883.23 L1821.93 883.16 L1823.55 882.80 L1825.18 882.98 L1826.80 884.64 L1828.42 882.40 L1830.05 884.50 L1831.67 883.74 L1833.29 884.39 L1834.92 884.44 L1836.54 885.24 L1838.16 884.87 L1839.78 884.57 L1841.41 882.68 L1843.03 883.27 L1844.65 882.40 L1846.28 882.65 L1847.90 883.95 L1849.52 884.11 L1851.15 881.68 L1852.77 882.97 L1854.39 883.90 L1856.01 884.44 L1857.64 885.47 L1859.26 884.24 L1860.88 884.16 L1862.51 884.07 L1864.13 883.29 L1865.75 880.12 L1867.38 884.46 L1869.00 884.37 L1870.62 884.80 L1872.24 884.16 L1873.87 881.17 L1875.49 884.40 L1877.11 882.82 L1878.74 883.11 L1880.36 884.61 L1881.98 884.21 L1883.61 883.42 L1885.23 884.26 L1886.85 882.55 L1888.47 884.90 L1890.10 883.16 L1891.72 882.94 L1893.34 884.72 L1894.97 883.89 L1896.59 884.02 L1898.21 883.59 L1899.84 883.59 L1901.46 883.38 L1903.08 885.00 L1904.70 881.38 L1906.33 886.18 L1907.95 881.43 L1909.57 881.77 L1911.20 883.97 L1912.82 884.81 L1914.44 883.74 L1916.07 884.26 L1917.69 883.09 L1919.31 883.71 L1920.93 885.14 L1922.56 883.96 L1924.18 882.90 L1925.80 883.22 L1927.43 884.48 L1929.05 884.76 L1930.67 883.79 L1932.30 883.82 L1933.92 882.94 L1935.54 883.82 L1937.16 883.42 L1938.79 883.15 L1940.41 883.96 L1942.03 884.13 L1943.66 884.74 L1945.28 885.12 L1946.90 884.00 L1948.53 883.74 L1950.15 885.56 L1951.77 884.77 L1953.39 884.59 L1955.02 883.90 L1956.64 883.85 L1958.26 883.11 L1959.89 883.69 L1961.51 883.76 L1963.13 884.08 L1964.76 884.25 L1966.38 882.89 L1968.00 884.42 L1969.62 883.27 L1971.25 883.59 L1972.87 885.98 L1974.49 883.97 L1976.12 885.28 L1977.74 885.11 L1979.36 883.60 L1980.99 884.49 L1982.61 883.05 L1984.23 883.38 L1985.85 884.01 L1987.48 886.23 L1989.10 884.27 L1990.72 884.07 L1992.35 883.73 L1993.97 883.74 L1995.59 885.03 L1997.22 884.62 L1998.84 883.36 L2000.46 884.65 L2002.08 883.95 L2003.71 882.47 L2005.33 884.41 L2006.95 882.96 L2008.58 883.45 L2010.20 884.28 L2011.82 882.63 L2013.45 882.02 L2015.07 883.96 L2016.69 882.20 L2018.31 885.34 L2019.94 884.93 L2021.56 883.15 L2023.18 883.64 L2024.81 884.05 L2026.43 883.69 L2028.05 884.59 L2029.68 884.33 L2031.30 883.91 L2032.92 884.43 L2034.70 877.20 L2036.17 884.30 L2037.79 885.65 L2039.41 883.07 L2041.04 884.22 L2042.66 883.36 L2044.28 885.56 L2045.91 883.32 L2047.53 883.50 L2049.15 884.57 L2050.77 884.35 L2052.40 884.97 L2054.02 884.53 L2055.64 883.12 L2057.27 881.95 L2058.89 883.56 L2060.51 882.10 L2062.14 883.14 L2063.76 884.93 L2065.38 884.39 L2067.00 885.14 L2068.63 884.64 L2070.25 883.70 L2071.87 883.67 L2073.50 884.02 L2075.12 884.56 L2076.74 884.07 L2078.37 883.20 L2079.99 883.56 L2081.61 883.18 L2083.23 883.54 L2084.86 882.28 L2086.48 883.22 L2088.10 882.64 L2089.73 885.54 L2091.35 882.70 L2092.97 883.64 L2094.60 882.60 L2096.22 884.80 L2097.84 885.05 L2099.46 884.27 L2101.09 884.47 L2102.71 884.27 L2104.33 883.95 L2105.96 883.17 L2107.58 882.89 L2109.20 882.98 L2110.83 882.55 L2112.45 884.22 L2114.07 884.51 L2115.69 883.53 L2117.32 883.68 L2118.94 884.63 L2120.56 885.19 L2122.19 884.37 L2123.81 883.17 L2125.43 884.63 L2127.06 883.62 L2128.68 883.44 L2130.30 884.06 L2131.92 884.25 L2133.55 883.25 L2135.17 883.63 L2136.79 886.41 L2138.42 884.90 L2140.04 884.06 L2141.66 883.75 L2143.29 882.94 L2144.91 883.73 L2146.53 884.56 L2148.15 882.35 L2149.78 882.09 L2151.40 881.66 L2153.02 885.11 L2154.65 884.15 L2156.27 883.70 L2157.89 884.75 L2159.52 884.52 L2161.14 882.65 L2162.76 883.18 L2164.38 882.45 L2166.01 884.89 L2167.70 875.40 L2169.25 884.97 L2170.88 884.34 L2172.50 883.40 L2174.12 883.69 L2175.75 884.84 L2177.37 883.85 L2178.99 883.65 L2180.61 885.47 L2182.24 881.43 L2183.86 883.85 L2185.48 883.43 L2187.11 886.47 L2188.73 884.16 L2190.35 883.51 L2191.98 883.56 L2193.60 883.78 L2195.22 884.69 L2196.84 883.98 L2198.47 884.53 L2200.00 880.00 L2201.71 883.65 L2203.34 884.16 L2204.96 883.69 L2206.58 883.45 L2208.21 882.87 L2209.83 884.56 L2211.45 883.08 L2213.07 884.23 L2214.70 884.34 L2216.32 884.74 L2217.94 883.60 L2219.57 884.16 L2221.19 882.52 L2222.81 883.88 L2224.44 884.07 L2226.06 885.40 L2227.68 883.84 L2229.30 884.71 L2230.93 884.08 L2232.55 884.61 L2234.17 884.48 L2235.80 884.50 L2237.42 883.02 L2239.04 884.83 L2240.67 883.42 L2242.29 884.80 L2244.00 870.80 L2245.53 883.67 L2247.16 882.52 L2248.78 883.63 L2250.40 883.62 L2252.03 882.90 L2253.65 883.43 L2255.27 883.43 L2256.90 884.68 L2258.52 885.14 L2260.14 885.30 L2261.76 883.42 L2263.39 883.77 L2265.01 884.45 L2266.63 883.01 L2268.26 883.59 L2269.88 885.66 L2271.50 884.25 L2273.13 883.55 L2274.75 884.49 L2276.37 884.10 L2277.99 883.63 L2279.62 883.42 L2281.24 883.21 L2282.86 882.83 L2284.49 883.56 L2286.11 884.09 L2287.73 884.45 L2289.36 884.86 L2290.98 880.59 L2292.60 885.00 L2294.22 885.05 L2295.85 883.73 L2297.47 883.13 L2299.09 883.14 L2300.72 881.42 L2302.34 884.23 L2303.96 883.28 L2305.59 884.46 L2307.21 883.04 L2308.83 883.84 L2310.45 883.88 L2312.08 884.24 L2313.70 883.88 L2315.32 882.93 L2316.95 883.75 L2318.57 883.83 L2320.19 883.20 L2321.82 883.99 L2323.44 883.42 L2325.06 883.90 L2326.68 884.03 L2328.31 884.30 L2329.93 883.19 L2331.55 882.61 L2333.18 884.23 L2334.80 885.30 L2336.42 885.16 L2338.05 884.82 L2339.00 873.10 L2341.29 883.99 L2342.91 883.87 L2344.54 884.26 L2346.16 883.40 L2347.78 884.45 L2349.41 885.68 L2351.03 884.33 L2352.65 886.01 L2354.28 883.11 L2355.90 883.49 L2357.52 885.74 L2359.14 884.39 L2360.77 883.36 L2362.39 885.91 L2364.01 882.20 L2365.64 884.59 L2367.26 885.54 L2368.88 883.89 L2370.51 883.31 L2372.13 883.90 L2373.75 883.58 L2375.37 883.69 L2377.00 884.11 L2378.62 883.87 L2380.24 883.49 L2381.87 883.28 L2383.49 882.78 L2385.80 889.30 L2386.74 883.29 L2388.36 885.06 L2389.98 883.47 L2391.60 885.93 L2393.23 885.22 L2394.85 883.76 L2396.47 883.95 L2398.10 883.99 L2399.72 885.44 L2401.34 884.02 L2402.97 883.40 L2404.59 884.66 L2406.21 883.15 L2407.83 884.00 L2409.46 883.21 L2411.08 884.43 L2412.70 884.92 L2414.33 883.24 L2415.95 882.83 L2417.57 884.69 L2419.20 883.00 L2420.82 884.64 L2422.44 885.24 L2424.06 884.08 L2425.69 884.86 L2427.31 884.15 L2428.93 883.43 L2430.56 880.48 L2432.18 883.55 L2433.80 882.54 L2435.43 883.28 L2437.05 884.93 L2438.67 884.10 L2440.29 883.88 L2441.92 885.43 L2443.54 883.09 L2445.16 883.58 L2446.79 884.42 L2448.41 884.55 L2450.03 883.29 L2451.66 883.33 L2453.28 885.26 L2454.90 884.78 L2456.52 884.66 L2458.15 885.03 L2459.77 884.76 L2461.39 884.31 L2463.02 884.23 L2464.64 883.96 L2466.26 884.45 L2467.89 883.96 L2469.51 884.58 L2471.13 884.14 L2472.75 883.47 L2474.38 884.42 L2476.00 886.60 L2477.62 884.57 L2479.25 884.08 L2480.87 884.61 L2482.49 882.20 L2484.12 884.44 L2485.74 882.79 L2487.36 883.87 L2488.98 884.68 L2490.61 884.26 L2492.23 882.59 L2493.85 883.10 L2495.48 884.43 L2497.10 883.35 L2498.72 883.71 L2500.35 884.42 L2501.97 884.16 L2503.59 884.53 L2505.21 881.61 L2506.84 884.83 L2508.46 884.22 L2510.08 884.75 L2511.71 881.72 L2513.33 884.49 L2514.95 882.58 L2516.58 885.13 L2518.20 883.70 L2519.82 884.35 L2521.44 884.13 L2523.07 880.58 L2524.69 883.75 L2526.31 884.22 L2527.94 884.13 L2529.56 883.04 L2531.18 884.02 L2532.81 884.23 L2534.43 884.68 L2536.05 884.14 L2537.67 884.82 L2539.30 884.94 L2540.92 883.77 L2542.54 883.61 L2544.17 883.81 L2545.79 883.21 L2547.41 884.10 L2549.04 884.66 L2550.66 884.17 L2552.28 884.05 L2553.90 884.79 L2555.53 881.97 L2557.15 884.49 L2559.00 880.00 L2560.40 885.55 L2562.02 883.55 L2563.64 884.71 L2565.27 884.45 L2566.89 883.47 L2568.51 884.48 L2570.13 884.44 L2571.76 884.68 L2573.38 883.70 L2575.00 883.49 L2576.63 883.60 L2578.25 884.21 L2579.87 880.54 L2581.50 883.59 L2583.12 884.75 L2584.74 884.31 L2586.36 883.23 L2587.99 883.54 L2589.61 884.73 L2591.23 884.11 L2592.86 883.91 L2594.48 885.18 L2596.10 882.51 L2597.73 882.68 L2599.35 885.29 L2600.97 883.51 L2602.59 883.30 L2604.22 884.44 L2605.84 884.57 L2607.46 881.69 L2609.09 883.31 L2610.71 883.97 L2612.33 884.31 L2613.96 884.42 L2615.58 884.00 L2617.20 884.03 L2618.82 884.06 L2620.45 884.93 L2622.07 883.27 L2623.69 883.28 L2625.32 883.63 L2626.94 884.64 L2628.56 883.74 L2630.19 882.79 L2631.81 884.21 L2633.43 883.58 L2635.05 883.29 L2636.68 883.70 L2638.30 883.42 L2639.92 883.88 L2641.55 884.42 L2643.17 884.86 L2644.79 884.34 L2646.42 884.16 L2648.04 882.69 L2649.66 884.41 L2651.28 885.08 L2652.91 882.80 L2654.53 882.57 L2656.15 883.93 L2657.78 883.99 L2659.40 885.27 L2661.02 884.09 L2662.65 882.46 L2664.27 882.90 L2665.89 884.60 L2667.51 884.13" fill="none" stroke="#73bf69" stroke-width="2" stroke-linejoin="round"/><path d="M1502.20 829.00 L1503.82 769.41 L1505.00 726.00 L1505.45 727.00 L1507.07 730.58 L1508.00 745.00 L1510.20 737.50 L1510.32 744.59 L1511.80 832.00 L1511.94 831.61 L1513.56 827.13 L1515.18 832.51 L1516.81 832.42 L1518.43 831.92 L1520.05 831.45 L1521.68 831.41 L1523.30 833.21 L1524.92 828.95 L1526.55 831.70 L1528.17 829.47 L1529.79 832.99 L1531.41 832.17 L1533.04 831.48 L1534.66 833.34 L1536.28 831.14 L1537.91 832.70 L1539.53 831.05 L1541.15 832.79 L1542.78 832.30 L1544.40 832.40 L1546.02 831.99 L1547.64 832.93 L1549.27 833.03 L1550.89 832.12 L1552.51 831.91 L1554.14 832.57 L1555.76 825.52 L1557.38 832.26 L1559.01 832.45 L1560.63 832.24 L1562.25 832.48 L1563.87 833.54 L1565.50 827.53 L1567.12 831.25 L1568.74 831.54 L1570.37 831.55 L1571.99 832.87 L1573.61 831.97 L1575.24 832.08 L1576.86 832.17 L1578.48 832.67 L1580.10 832.34 L1581.73 831.88 L1583.35 831.99 L1584.97 832.98 L1586.60 832.07 L1588.22 831.93 L1589.84 831.20 L1591.47 832.26 L1593.09 829.68 L1594.71 830.98 L1596.33 832.72 L1597.96 833.04 L1599.58 832.15 L1601.20 831.20 L1602.83 832.86 L1604.45 831.52 L1606.07 831.43 L1607.70 831.85 L1609.32 832.32 L1610.94 832.32 L1612.56 833.28 L1614.19 832.17 L1615.81 832.34 L1617.43 831.90 L1619.06 832.05 L1620.68 831.57 L1622.30 832.89 L1623.93 832.51 L1625.55 831.52 L1627.17 832.85 L1628.79 831.93 L1630.42 830.95 L1632.04 832.68 L1633.66 831.14 L1635.29 830.26 L1636.91 830.49 L1638.53 833.89 L1640.16 831.17 L1641.78 832.80 L1643.40 833.20 L1645.02 830.98 L1646.65 831.64 L1648.27 831.84 L1648.40 830.87 L1649.89 794.19 L1651.52 752.83 L1651.60 750.80 L1653.14 751.57 L1654.76 751.11 L1656.39 753.22 L1658.01 753.28 L1659.63 751.31 L1662.00 744.00 L1662.88 748.47 L1664.50 750.68 L1665.60 749.24 L1666.12 777.19 L1667.20 832.00 L1667.75 830.69 L1669.37 832.93 L1670.99 831.42 L1672.80 851.30 L1674.24 833.39 L1675.86 831.43 L1677.48 832.29 L1679.11 831.99 L1680.73 831.99 L1682.35 833.45 L1683.98 832.35 L1685.60 831.60 L1687.22 832.91 L1688.85 832.45 L1690.47 832.07 L1692.09 833.43 L1693.71 830.34 L1695.34 831.47 L1696.96 828.03 L1698.58 832.27 L1700.21 832.20 L1701.83 831.65 L1703.45 832.65 L1705.08 824.16 L1706.70 832.30 L1708.32 833.09 L1709.94 832.39 L1711.57 829.43 L1713.19 831.55 L1714.81 833.03 L1716.44 831.83 L1718.06 831.52 L1719.68 831.59 L1721.31 832.09 L1722.93 831.42 L1724.55 831.52 L1726.17 831.53 L1727.80 830.78 L1729.42 831.62 L1731.04 832.25 L1732.67 832.35 L1734.29 831.26 L1735.91 832.69 L1737.54 831.74 L1739.16 831.42 L1740.78 831.69 L1742.40 832.73 L1744.03 831.05 L1745.65 831.00 L1747.27 832.86 L1748.90 832.77 L1750.52 832.33 L1752.14 832.64 L1753.77 831.81 L1755.39 832.03 L1757.01 832.82 L1758.63 831.99 L1760.26 832.84 L1761.88 832.63 L1763.50 824.65 L1765.13 832.65 L1766.75 832.40 L1768.37 831.64 L1770.00 831.36 L1771.62 833.12 L1773.24 832.16 L1774.86 831.32 L1776.49 832.15 L1778.11 834.15 L1779.73 831.60 L1781.36 832.55 L1782.98 830.98 L1784.60 832.81 L1786.23 832.36 L1787.85 832.48 L1789.47 834.37 L1791.09 832.50 L1792.72 829.79 L1794.34 831.34 L1795.96 831.10 L1797.59 832.49 L1799.21 830.80 L1800.83 831.86 L1802.46 832.03 L1804.08 832.14 L1805.70 831.89 L1807.32 831.62 L1808.95 831.92 L1810.57 831.59 L1810.80 831.98 L1812.19 792.04 L1813.82 745.18 L1814.00 740.00 L1815.44 741.53 L1817.06 740.95 L1818.00 736.94 L1818.69 779.68 L1819.60 832.00 L1820.31 832.83 L1821.93 831.17 L1823.55 831.68 L1825.18 832.27 L1826.80 831.62 L1828.42 831.08 L1830.05 832.61 L1831.67 831.90 L1833.29 832.06 L1834.92 831.88 L1836.54 830.74 L1838.16 832.38 L1839.78 832.07 L1841.41 826.95 L1843.03 827.48 L1844.65 833.37 L1846.28 833.16 L1847.90 831.05 L1849.52 830.62 L1851.15 830.27 L1852.77 831.99 L1854.39 831.96 L1856.01 831.38 L1857.64 831.25 L1859.26 832.11 L1860.88 828.81 L1862.51 832.47 L1864.13 827.68 L1865.75 832.33 L1867.38 831.42 L1869.00 832.06 L1870.62 832.82 L1872.24 827.08 L1873.87 832.74 L1875.49 831.81 L1877.11 831.65 L1878.74 833.04 L1880.36 831.04 L1881.98 829.55 L1883.61 831.99 L1885.23 832.63 L1886.85 832.52 L1888.47 831.37 L1890.10 833.98 L1891.72 833.18 L1893.34 831.39 L1894.97 833.35 L1896.59 828.15 L1898.21 832.47 L1899.84 826.35 L1901.46 831.50 L1903.08 831.93 L1904.70 831.96 L1906.90 773.00 L1907.95 824.02 L1909.57 830.76 L1911.20 832.49 L1912.82 831.63 L1914.44 832.15 L1916.07 832.36 L1917.69 832.17 L1919.31 831.63 L1920.93 831.88 L1922.56 832.98 L1924.18 831.71 L1925.80 831.15 L1927.43 832.51 L1929.05 828.47 L1930.67 831.36 L1932.30 831.16 L1933.92 830.37 L1935.54 830.94 L1937.16 832.90 L1938.00 832.53 L1938.79 810.14 L1940.41 765.32 L1941.00 749.00 L1942.03 751.30 L1943.66 748.32 L1945.28 749.98 L1946.90 747.43 L1948.53 751.17 L1950.15 747.03 L1951.77 748.75 L1953.39 745.57 L1954.50 747.27 L1955.02 762.92 L1956.64 806.30 L1957.60 832.00 L1958.26 831.33 L1959.89 832.82 L1960.50 831.42 L1961.51 795.34 L1963.13 736.54 L1963.20 734.00 L1964.76 740.23 L1966.38 733.67 L1968.00 726.00 L1969.62 731.29 L1971.25 732.90 L1972.87 742.30 L1974.49 737.96 L1976.12 729.63 L1977.74 739.83 L1979.36 729.26 L1980.99 737.61 L1982.61 723.72 L1984.23 730.76 L1985.85 739.52 L1987.48 732.76 L1989.10 732.28 L1990.72 735.90 L1992.35 735.76 L1993.97 733.73 L1995.59 732.88 L1997.22 744.19 L1998.84 742.90 L2000.00 728.00 L2002.08 731.11 L2003.71 734.03 L2005.33 735.20 L2006.95 738.82 L2009.00 730.00 L2010.20 734.45 L2011.82 737.57 L2013.45 735.05 L2014.00 737.67 L2015.07 741.01 L2016.69 747.09 L2018.00 752.00 L2018.31 750.28 L2019.94 752.97 L2021.56 754.94 L2023.18 751.02 L2024.81 751.19 L2026.43 752.31 L2028.05 748.71 L2029.68 756.58 L2031.30 748.65 L2032.92 751.11 L2034.54 749.79 L2036.17 755.79 L2037.79 750.79 L2039.41 750.75 L2041.04 756.77 L2042.66 751.72 L2044.28 750.06 L2045.91 752.00 L2047.53 752.51 L2049.15 750.14 L2050.77 751.56 L2052.40 751.49 L2054.02 753.84 L2055.64 753.95 L2057.27 754.12 L2058.89 751.71 L2060.51 754.03 L2060.80 751.49 L2062.14 796.67 L2063.20 832.00 L2063.76 832.94 L2065.38 832.85 L2067.00 833.34 L2068.63 830.75 L2070.25 831.65 L2071.87 833.21 L2073.50 824.65 L2075.12 831.08 L2076.74 833.07 L2078.37 831.11 L2078.50 832.94 L2079.99 792.76 L2081.50 753.00 L2081.61 751.30 L2083.23 752.25 L2084.86 753.55 L2086.48 757.86 L2088.10 756.66 L2089.73 756.03 L2091.35 752.57 L2092.97 752.36 L2094.60 753.76 L2095.30 752.46 L2096.22 793.38 L2097.10 832.00 L2097.84 799.52 L2098.90 753.00 L2099.46 752.07 L2101.09 752.60 L2102.71 754.72 L2104.33 752.88 L2105.96 753.49 L2107.58 752.49 L2109.20 752.62 L2110.83 752.35 L2112.45 755.56 L2113.20 753.48 L2114.07 777.55 L2115.69 823.25 L2116.00 832.00 L2117.32 786.09 L2118.30 752.00 L2118.94 754.93 L2120.56 751.35 L2122.19 753.61 L2123.81 748.46 L2125.43 750.20 L2127.06 750.66 L2128.68 749.28 L2130.30 750.09 L2131.60 736.30 L2132.50 749.69 L2133.55 778.70 L2135.17 822.98 L2135.50 832.00 L2136.79 831.47 L2138.42 832.00 L2140.04 831.68 L2141.66 832.03 L2143.60 813.00 L2144.91 831.82 L2146.53 831.36 L2148.15 833.07 L2149.78 833.73 L2151.40 831.44 L2153.02 832.92 L2155.00 813.00 L2156.27 831.16 L2157.89 826.69 L2159.52 832.20 L2161.14 831.95 L2162.76 826.02 L2164.38 831.95 L2166.01 830.95 L2167.63 831.87 L2169.25 832.30 L2170.88 832.00 L2172.50 832.41 L2174.12 831.29 L2175.75 833.37 L2177.37 832.13 L2178.99 831.29 L2179.90 784.60 L2182.24 832.16 L2183.86 833.65 L2185.48 831.98 L2187.11 832.91 L2188.73 832.09 L2190.35 833.16 L2191.98 831.95 L2193.60 833.64 L2195.22 831.77 L2196.84 832.68 L2198.47 826.43 L2200.09 831.03 L2201.71 832.17 L2203.34 832.81 L2204.30 830.91 L2204.96 814.26 L2206.58 770.73 L2208.21 726.92 L2209.10 703.00 L2209.83 712.52 L2211.40 733.00 L2211.45 734.65 L2213.07 788.11 L2214.40 832.00 L2214.70 833.38 L2216.32 832.93 L2217.94 833.06 L2219.57 832.20 L2221.19 831.24 L2222.81 831.95 L2224.44 826.60 L2226.06 831.79 L2226.10 832.20 L2227.68 780.18 L2228.60 750.00 L2229.80 738.60 L2230.93 754.28 L2232.55 755.06 L2234.17 749.67 L2235.80 748.52 L2237.42 755.15 L2239.04 753.50 L2240.67 754.21 L2242.29 753.22 L2242.40 751.56 L2243.91 800.32 L2244.90 832.00 L2245.53 833.87 L2247.16 834.10 L2248.78 833.89 L2250.00 820.00 L2252.03 828.77 L2253.65 827.99 L2255.27 832.15 L2256.90 832.61 L2258.52 828.75 L2260.14 830.31 L2262.00 815.00 L2263.39 832.23 L2265.01 829.87 L2266.63 830.46 L2268.26 830.52 L2269.88 834.65 L2271.50 828.44 L2273.13 822.40 L2275.00 816.00 L2276.37 831.20 L2277.99 826.61 L2279.62 829.45 L2281.24 831.79 L2282.86 834.45 L2284.49 826.37 L2286.11 827.99 L2287.73 829.65 L2289.36 829.72 L2291.00 812.00 L2292.60 832.51 L2294.22 828.79 L2295.85 831.98 L2297.47 831.95 L2299.09 830.01 L2300.72 831.52 L2302.34 829.89 L2303.96 830.33 L2305.59 826.78 L2307.21 833.07 L2308.83 828.92 L2310.45 829.07 L2312.08 832.41 L2313.70 824.05 L2316.00 815.00 L2316.95 827.91 L2318.57 824.57 L2320.19 827.53 L2321.82 830.50 L2323.44 829.41 L2325.06 824.25 L2326.68 830.51 L2328.31 828.65 L2329.93 827.84 L2330.00 831.08 L2331.55 828.20 L2333.18 829.70 L2334.80 822.42 L2336.42 830.09 L2338.05 832.99 L2339.67 827.98 L2340.00 827.67 L2341.29 819.07 L2342.91 828.05 L2345.00 812.00 L2346.16 826.68 L2347.78 831.36 L2349.41 825.71 L2351.03 820.54 L2352.65 824.24 L2354.28 827.41 L2355.90 825.61 L2357.52 822.02 L2359.14 829.01 L2360.77 825.32 L2362.39 831.19 L2364.01 827.71 L2366.00 818.00 L2367.26 823.73 L2368.88 829.15 L2370.51 825.81 L2372.13 828.53 L2373.75 829.93 L2375.37 830.32 L2377.00 828.13 L2378.62 827.57 L2380.24 833.29 L2381.87 829.03 L2383.49 827.09 L2385.11 828.28 L2386.74 828.84 L2388.36 822.72 L2389.98 829.35 L2391.60 826.66 L2393.23 830.53 L2395.00 812.00 L2396.47 828.08 L2398.10 827.71 L2399.72 829.65 L2401.34 830.35 L2402.97 830.31 L2404.59 826.35 L2406.21 828.00 L2407.83 828.92 L2409.46 831.32 L2411.08 827.41 L2412.70 831.97 L2414.33 828.55 L2415.95 831.98 L2417.57 829.29 L2420.00 818.00 L2420.82 828.19 L2422.44 829.40 L2424.06 826.18 L2425.69 828.63 L2427.31 828.14 L2428.93 829.45 L2430.80 860.50 L2432.18 827.16 L2434.00 783.00 L2435.43 826.45 L2437.05 824.82 L2438.67 829.19 L2440.29 832.85 L2441.92 832.05 L2443.54 827.75 L2445.16 824.78 L2446.79 829.87 L2448.41 832.94 L2450.03 826.01 L2451.66 831.57 L2453.28 828.68 L2454.90 827.23 L2456.52 827.66 L2458.15 829.74 L2459.00 812.00 L2461.39 832.36 L2463.02 830.81 L2464.64 827.86 L2466.26 832.60 L2467.89 828.82 L2469.51 829.24 L2471.13 827.75 L2473.00 811.00 L2474.38 827.01 L2476.00 829.86 L2477.62 832.60 L2479.25 823.68 L2480.87 831.91 L2482.49 825.26 L2484.12 832.04 L2485.74 825.90 L2487.36 833.40 L2488.98 830.44 L2490.61 827.85 L2492.23 829.70 L2493.85 826.34 L2495.48 828.82 L2496.60 827.16 L2497.10 819.80 L2498.72 788.36 L2500.35 756.73 L2500.80 748.00 L2501.97 750.46 L2503.59 751.05 L2505.21 747.21 L2506.84 751.78 L2508.46 750.68 L2510.08 748.90 L2511.71 747.40 L2513.33 748.88 L2514.10 748.79 L2514.95 764.69 L2516.58 792.86 L2518.20 820.86 L2518.70 829.50 L2519.82 829.52 L2521.44 830.54 L2523.07 828.68 L2524.69 829.06 L2526.31 829.74 L2527.94 826.78 L2529.56 828.98 L2531.18 825.09 L2532.81 830.71 L2534.43 828.88 L2536.05 827.93 L2537.67 824.92 L2539.30 830.37 L2541.20 799.60 L2542.54 830.12 L2544.17 829.50 L2545.79 824.09 L2547.41 829.45 L2549.04 828.80 L2550.66 831.14 L2552.28 829.79 L2553.90 829.10 L2555.53 828.16 L2557.15 829.70 L2559.00 798.40 L2560.40 829.95 L2562.02 828.42 L2563.64 829.61 L2565.27 830.13 L2566.89 830.30 L2568.51 829.32 L2570.13 830.44 L2571.40 827.73 L2571.76 817.76 L2573.38 764.95 L2573.90 748.00 L2575.00 746.24 L2576.63 750.87 L2578.25 749.51 L2579.87 752.91 L2581.50 750.10 L2583.12 748.31 L2584.74 748.62 L2586.36 750.89 L2587.70 749.88 L2587.99 759.22 L2589.61 810.74 L2590.20 829.50 L2591.23 829.23 L2592.86 831.09 L2594.48 830.16 L2596.10 829.72 L2596.70 829.65 L2597.73 798.78 L2599.35 750.46 L2599.60 743.00 L2600.97 740.14 L2602.59 741.44 L2604.22 745.07 L2605.84 745.00 L2607.20 748.06 L2607.46 753.79 L2609.09 808.88 L2609.70 829.50 L2610.71 829.68 L2612.33 829.31 L2613.96 830.82 L2615.58 828.77 L2617.20 829.65 L2618.82 829.07 L2621.00 812.00 L2622.07 830.27 L2623.69 829.58 L2625.32 830.82 L2626.94 830.63 L2628.56 828.79 L2630.19 831.24 L2631.81 828.76 L2633.43 828.34 L2635.05 828.68 L2636.68 830.18 L2638.10 827.95 L2638.30 822.87 L2639.92 769.21 L2640.50 750.00 L2641.55 749.13 L2643.17 749.71 L2644.79 749.85 L2646.42 749.05 L2648.00 746.00 L2649.66 749.58 L2651.28 745.90 L2652.91 748.06 L2654.53 749.40 L2655.50 750.58 L2656.15 779.16 L2657.20 829.50 L2657.78 828.43 L2659.40 829.67 L2661.02 829.33 L2662.00 790.00 L2664.27 831.14 L2665.20 727.80 L2667.51 832.48 L2668.20 831.96" fill="none" stroke="#f2cc0c" stroke-width="2" stroke-linejoin="round"/><path d="M1502.20 829.00 L1503.82 769.41 L1505.00 726.00 L1505.45 727.00 L1507.07 730.58 L1508.69 734.16 L1510.20 737.50 L1510.32 744.59 L1511.80 832.00 L1511.94 831.79 L1513.56 830.06 L1515.18 831.79 L1516.81 832.36 L1518.43 832.03 L1520.05 832.63 L1521.68 832.53 L1523.30 832.07 L1524.92 831.15 L1526.55 830.66 L1528.17 832.31 L1529.79 831.24 L1531.41 832.26 L1533.04 831.92 L1534.66 831.91 L1536.28 832.06 L1537.91 832.24 L1539.53 832.79 L1541.15 831.79 L1542.78 831.91 L1544.40 833.17 L1546.02 832.16 L1547.64 832.06 L1549.27 832.05 L1550.89 832.15 L1552.51 832.54 L1554.14 831.85 L1555.76 832.36 L1557.38 832.83 L1559.01 832.79 L1560.63 832.22 L1562.25 831.99 L1563.87 833.01 L1565.50 832.46 L1567.12 831.91 L1568.74 831.89 L1570.37 831.79 L1571.99 831.69 L1573.61 833.20 L1575.24 831.56 L1576.86 831.21 L1578.48 831.78 L1580.10 832.01 L1581.73 824.89 L1583.35 831.96 L1584.97 831.83 L1586.60 832.32 L1588.22 832.32 L1589.84 832.68 L1591.47 831.57 L1593.09 831.81 L1594.71 830.18 L1596.33 832.60 L1597.96 832.50 L1599.58 831.26 L1601.20 831.96 L1602.83 831.79 L1604.45 825.71 L1606.07 832.15 L1607.70 832.17 L1609.32 832.10 L1610.94 832.15 L1612.56 831.91 L1614.19 832.11 L1615.81 832.29 L1617.43 832.19 L1619.06 832.34 L1620.68 832.49 L1622.30 832.67 L1623.93 831.82 L1625.55 832.03 L1627.17 831.96 L1628.79 832.08 L1630.42 831.38 L1632.04 832.50 L1633.66 831.25 L1635.29 832.67 L1636.91 832.15 L1638.53 831.90 L1640.16 832.00 L1641.78 830.88 L1643.40 832.25 L1645.02 832.59 L1646.65 833.36 L1648.27 833.16 L1648.40 831.43 L1649.89 794.19 L1651.52 752.83 L1651.60 750.80 L1653.14 752.30 L1654.76 748.12 L1656.39 749.39 L1658.01 748.76 L1659.63 747.76 L1662.00 747.00 L1662.88 745.36 L1664.50 750.56 L1665.60 752.05 L1666.12 777.19 L1667.20 832.00 L1667.75 830.81 L1669.37 832.41 L1670.99 831.35 L1672.62 832.74 L1674.24 832.26 L1675.86 830.77 L1677.48 832.57 L1679.11 832.01 L1680.73 831.85 L1682.35 831.82 L1683.98 830.98 L1685.60 832.12 L1687.22 831.51 L1688.85 832.27 L1690.47 831.96 L1692.09 831.29 L1693.71 832.34 L1695.34 830.37 L1696.96 832.09 L1698.58 832.15 L1700.21 831.90 L1701.83 831.17 L1703.45 827.97 L1705.08 832.10 L1706.70 831.67 L1708.32 831.26 L1709.94 829.55 L1711.57 829.79 L1713.19 832.73 L1714.81 832.31 L1716.44 832.26 L1718.06 831.47 L1719.68 831.82 L1721.31 830.68 L1722.93 832.63 L1724.55 831.27 L1726.17 832.14 L1727.80 826.72 L1729.42 831.93 L1731.04 832.87 L1732.67 832.32 L1734.29 832.12 L1735.91 833.13 L1737.54 831.93 L1739.16 830.85 L1740.78 831.96 L1742.40 831.36 L1744.03 832.06 L1745.65 832.20 L1747.27 832.00 L1748.90 831.84 L1750.52 831.67 L1752.14 831.13 L1753.77 831.35 L1755.39 831.10 L1757.01 826.56 L1758.63 831.66 L1760.26 832.04 L1761.88 832.00 L1763.50 831.77 L1765.13 831.18 L1766.75 832.29 L1768.37 831.82 L1770.00 832.31 L1771.62 832.90 L1773.24 832.22 L1774.86 827.09 L1776.49 831.58 L1778.11 831.55 L1779.73 833.35 L1781.36 833.30 L1782.98 832.65 L1784.60 831.56 L1786.23 832.93 L1787.85 832.73 L1789.47 832.19 L1791.09 833.22 L1792.72 831.60 L1794.34 831.84 L1795.96 832.35 L1797.59 831.65 L1799.21 832.57 L1800.83 831.69 L1802.46 832.07 L1804.08 832.35 L1805.70 831.34 L1807.32 831.73 L1808.95 832.29 L1810.57 832.69 L1810.80 832.72 L1812.19 792.04 L1813.82 745.18 L1814.00 740.00 L1815.44 740.20 L1817.06 738.37 L1818.00 738.55 L1818.69 779.68 L1819.60 832.00 L1820.31 832.51 L1821.93 831.38 L1823.55 832.69 L1825.18 832.66 L1826.80 831.06 L1828.42 831.31 L1830.05 832.60 L1831.67 832.92 L1833.29 832.68 L1834.92 831.77 L1836.54 832.22 L1838.16 832.21 L1839.78 831.83 L1841.41 832.20 L1843.03 833.30 L1844.65 832.16 L1846.28 832.51 L1847.90 831.98 L1849.52 831.84 L1851.15 831.81 L1852.77 832.37 L1854.39 827.96 L1856.01 831.16 L1857.64 831.93 L1859.26 832.15 L1860.88 832.60 L1862.51 831.90 L1864.13 831.70 L1865.75 831.85 L1867.38 831.73 L1869.00 831.90 L1870.62 833.10 L1872.24 833.65 L1873.87 833.04 L1875.49 831.71 L1877.11 832.17 L1878.74 831.06 L1880.36 831.34 L1881.98 832.40 L1883.61 830.98 L1885.23 831.52 L1886.85 832.12 L1888.47 832.16 L1890.10 831.75 L1891.72 832.64 L1893.34 831.80 L1894.97 833.09 L1896.59 832.01 L1898.21 831.97 L1899.84 832.18 L1901.46 831.84 L1903.08 831.20 L1904.70 831.49 L1906.33 832.21 L1907.95 832.68 L1909.57 832.27 L1911.20 832.22 L1912.90 804.00 L1914.44 831.98 L1916.07 831.73 L1917.69 832.26 L1919.31 832.47 L1920.93 832.97 L1922.56 832.08 L1924.18 832.31 L1925.80 833.14 L1927.43 831.18 L1929.05 831.71 L1929.90 824.00 L1932.30 832.11 L1933.92 831.32 L1935.54 831.52 L1937.16 832.51 L1938.00 831.62 L1938.79 810.14 L1940.41 765.32 L1941.00 749.00 L1942.03 750.84 L1943.66 750.52 L1946.00 744.00 L1946.90 748.74 L1948.53 749.32 L1950.15 750.48 L1951.77 749.81 L1953.39 751.85 L1954.50 747.92 L1955.02 762.92 L1956.64 806.30 L1957.60 832.00 L1958.26 832.55 L1959.89 832.11 L1960.50 832.56 L1961.51 795.34 L1963.13 736.54 L1963.20 734.00 L1964.76 737.74 L1966.38 732.54 L1968.00 735.80 L1969.62 734.88 L1971.25 734.86 L1972.87 734.82 L1974.49 732.07 L1976.12 733.73 L1977.74 728.58 L1979.36 736.97 L1980.99 736.22 L1982.61 732.69 L1984.23 740.89 L1985.85 735.08 L1987.48 732.39 L1989.10 732.31 L1991.50 724.80 L1992.35 729.43 L1993.97 736.95 L1995.59 735.43 L1997.22 742.56 L1998.84 740.38 L2000.46 733.85 L2002.08 744.51 L2003.71 734.24 L2005.33 741.77 L2006.95 746.36 L2009.00 735.00 L2010.20 742.97 L2011.82 739.08 L2013.45 739.08 L2014.00 730.57 L2015.07 741.01 L2016.69 747.09 L2018.00 752.00 L2018.31 753.36 L2019.94 751.43 L2021.56 750.78 L2023.18 755.21 L2024.81 749.60 L2026.43 751.36 L2028.05 751.96 L2029.68 751.63 L2031.30 753.62 L2032.92 747.83 L2034.54 754.34 L2036.17 748.94 L2037.79 749.92 L2039.41 753.35 L2041.04 752.65 L2042.66 751.79 L2044.28 750.19 L2045.91 752.10 L2047.53 752.71 L2049.15 753.96 L2050.77 752.65 L2052.40 750.06 L2054.02 751.42 L2055.64 750.48 L2057.27 751.34 L2058.89 754.98 L2060.51 752.32 L2060.80 750.81 L2062.14 796.67 L2063.20 832.00 L2063.76 832.64 L2065.38 831.97 L2067.00 832.21 L2068.63 832.12 L2070.25 825.71 L2071.87 831.56 L2073.50 830.03 L2075.12 832.18 L2076.74 831.20 L2078.37 832.01 L2078.50 831.24 L2079.99 792.76 L2081.50 753.00 L2081.61 755.02 L2083.23 751.41 L2084.86 752.18 L2086.48 751.42 L2088.10 750.94 L2089.73 752.56 L2091.35 750.08 L2092.97 752.53 L2094.60 753.33 L2095.30 752.59 L2096.22 793.38 L2097.10 832.00 L2097.84 799.52 L2098.90 753.00 L2099.46 753.03 L2101.09 750.79 L2102.71 750.15 L2104.33 750.97 L2105.96 754.73 L2107.58 753.56 L2109.20 750.24 L2110.83 755.75 L2112.45 754.05 L2113.20 754.77 L2114.07 777.55 L2115.69 823.25 L2116.00 832.00 L2117.32 786.09 L2118.30 752.00 L2118.94 753.56 L2120.56 753.79 L2122.19 748.85 L2123.81 751.40 L2125.43 749.83 L2127.06 753.87 L2128.68 751.68 L2130.30 750.36 L2131.92 749.74 L2132.50 746.73 L2133.55 778.70 L2135.17 822.98 L2135.50 832.00 L2136.79 832.09 L2138.42 831.49 L2140.04 831.97 L2141.66 831.78 L2143.29 832.72 L2144.91 832.15 L2146.53 833.12 L2148.15 831.01 L2150.00 820.00 L2151.40 832.95 L2153.02 831.39 L2154.65 832.39 L2156.27 833.38 L2157.89 831.46 L2159.52 832.06 L2161.14 832.47 L2162.76 831.53 L2164.38 831.63 L2166.01 832.28 L2167.63 832.03 L2169.25 832.10 L2170.88 831.84 L2172.50 832.31 L2174.12 830.67 L2175.75 833.67 L2177.37 831.65 L2178.99 831.98 L2180.61 830.91 L2182.24 831.07 L2183.86 831.85 L2185.48 833.03 L2187.11 833.36 L2188.73 833.52 L2190.35 831.61 L2191.98 832.69 L2193.60 831.03 L2195.22 831.86 L2196.84 828.48 L2198.47 831.91 L2200.09 831.27 L2201.71 831.09 L2203.34 832.31 L2204.30 831.38 L2204.96 814.26 L2206.58 770.73 L2208.21 726.92 L2209.10 703.00 L2209.83 712.52 L2211.40 733.00 L2211.45 734.65 L2213.07 788.11 L2214.40 832.00 L2214.70 832.68 L2216.32 831.81 L2218.30 808.70 L2219.57 831.08 L2221.19 832.29 L2222.81 832.64 L2224.44 832.02 L2226.06 832.12 L2226.10 832.65 L2227.68 780.18 L2228.60 750.00 L2229.30 749.96 L2230.93 750.04 L2232.55 752.05 L2234.17 749.19 L2235.80 750.79 L2237.42 749.09 L2239.04 750.63 L2240.67 752.90 L2242.29 754.11 L2242.40 753.02 L2243.91 800.32 L2244.90 832.00 L2245.53 834.15 L2247.16 832.71 L2248.78 829.74 L2250.40 830.16 L2252.03 828.44 L2253.65 831.69 L2255.27 833.12 L2256.90 823.98 L2258.00 820.00 L2260.14 828.52 L2261.76 832.25 L2263.39 826.95 L2265.01 831.35 L2266.63 831.63 L2268.26 832.97 L2269.88 831.34 L2271.50 832.44 L2273.13 827.09 L2275.00 820.00 L2276.37 832.53 L2277.99 831.85 L2279.62 829.44 L2281.24 832.15 L2282.86 830.34 L2284.00 818.00 L2286.11 832.90 L2287.73 832.04 L2289.36 828.57 L2290.98 829.93 L2292.60 829.02 L2294.22 833.29 L2295.85 826.93 L2297.47 828.82 L2299.09 829.86 L2300.00 811.00 L2302.34 830.29 L2303.96 830.18 L2305.59 830.96 L2307.21 830.79 L2308.83 831.76 L2310.45 828.77 L2312.08 827.58 L2313.70 831.41 L2315.32 824.89 L2316.95 830.92 L2318.57 830.59 L2320.19 823.88 L2322.00 822.00 L2323.44 830.90 L2325.06 823.00 L2326.68 831.88 L2328.31 830.49 L2329.93 831.81 L2330.00 831.62 L2331.55 830.04 L2333.18 827.54 L2335.50 803.00 L2336.42 830.27 L2338.05 828.99 L2339.67 820.29 L2340.00 828.54 L2341.29 821.39 L2342.91 830.51 L2344.54 829.17 L2346.16 828.22 L2347.78 829.61 L2349.41 830.31 L2351.03 828.89 L2352.00 822.00 L2354.28 828.19 L2355.90 828.90 L2357.52 828.84 L2359.14 830.87 L2360.77 829.37 L2362.39 829.86 L2364.01 826.53 L2365.64 831.97 L2367.26 827.98 L2368.88 830.07 L2370.51 825.68 L2372.13 831.73 L2373.75 825.76 L2375.37 829.19 L2377.00 830.29 L2378.62 826.08 L2380.24 829.83 L2381.87 828.55 L2384.10 810.00 L2385.11 828.82 L2386.74 828.67 L2388.36 828.00 L2389.98 825.21 L2391.60 829.38 L2393.23 830.49 L2394.85 830.83 L2396.47 827.51 L2398.10 831.59 L2399.72 827.71 L2401.34 829.82 L2403.20 808.80 L2404.59 828.95 L2406.21 823.04 L2407.80 797.30 L2409.46 827.87 L2411.08 830.32 L2412.70 830.48 L2414.33 829.36 L2415.95 828.25 L2417.57 828.63 L2420.00 822.00 L2420.82 829.65 L2422.44 827.38 L2424.06 830.35 L2425.69 826.63 L2427.31 831.48 L2428.93 829.96 L2430.56 828.68 L2432.18 830.65 L2434.00 790.00 L2435.43 825.97 L2437.05 828.71 L2438.67 828.76 L2440.29 828.29 L2441.92 824.81 L2443.54 830.55 L2445.16 829.93 L2446.79 830.20 L2448.41 821.91 L2450.03 827.79 L2451.66 828.55 L2453.28 825.81 L2454.90 829.53 L2456.52 830.22 L2458.15 827.41 L2459.77 829.92 L2461.39 830.31 L2463.02 824.98 L2464.64 827.59 L2466.26 831.34 L2467.89 826.29 L2469.51 831.19 L2471.13 829.90 L2472.75 827.48 L2474.38 830.35 L2476.00 825.09 L2477.80 797.30 L2479.25 826.87 L2481.20 783.50 L2482.49 828.42 L2484.12 828.64 L2485.74 830.99 L2487.36 827.77 L2488.98 831.38 L2490.61 828.89 L2492.23 824.14 L2493.85 830.17 L2495.48 831.62 L2496.60 831.05 L2497.10 819.80 L2498.72 788.36 L2500.35 756.73 L2500.80 748.00 L2501.97 747.96 L2503.59 749.92 L2505.21 751.40 L2506.84 747.67 L2508.46 751.43 L2510.08 745.53 L2511.71 746.66 L2513.33 747.61 L2514.10 748.48 L2514.95 764.69 L2516.58 792.86 L2518.20 820.86 L2518.70 829.50 L2519.82 828.84 L2521.44 828.82 L2523.07 830.14 L2524.69 830.25 L2526.31 824.80 L2527.90 806.50 L2529.56 830.06 L2531.18 828.78 L2532.81 828.94 L2534.43 829.00 L2536.05 829.33 L2537.67 830.82 L2539.30 828.36 L2540.92 828.71 L2542.54 829.41 L2544.17 829.95 L2545.79 829.76 L2547.41 829.60 L2549.04 829.78 L2550.66 828.89 L2552.28 828.74 L2553.90 829.04 L2555.53 829.11 L2557.15 829.75 L2558.77 830.64 L2560.40 828.82 L2562.00 728.30 L2563.64 828.97 L2565.27 830.05 L2566.89 830.21 L2568.51 831.14 L2570.13 830.50 L2571.40 829.47 L2571.76 817.76 L2573.38 764.95 L2573.90 748.00 L2575.00 750.29 L2576.63 748.63 L2578.25 748.20 L2579.87 746.70 L2581.50 749.45 L2583.12 747.66 L2584.74 749.46 L2586.36 747.63 L2587.70 748.66 L2587.99 759.22 L2589.61 810.74 L2590.20 829.50 L2591.23 828.82 L2592.86 829.21 L2594.48 829.38 L2596.10 827.79 L2596.70 830.33 L2597.73 798.78 L2599.35 750.46 L2599.60 743.00 L2600.97 741.86 L2602.59 743.68 L2604.22 745.91 L2605.84 747.53 L2607.20 746.12 L2607.46 753.79 L2609.09 808.88 L2609.70 829.50 L2610.71 830.52 L2612.33 827.07 L2613.96 829.24 L2615.58 831.48 L2617.20 829.57 L2618.82 828.98 L2620.45 828.89 L2622.07 828.14 L2623.69 830.03 L2625.32 828.60 L2626.94 829.66 L2628.56 828.70 L2630.19 831.10 L2631.80 805.30 L2633.43 829.07 L2635.05 829.40 L2636.68 829.91 L2638.10 828.64 L2638.30 822.87 L2639.92 769.21 L2640.50 750.00 L2641.55 750.88 L2643.17 748.32 L2644.79 748.19 L2646.42 750.03 L2648.00 741.00 L2649.66 749.13 L2651.28 752.94 L2652.91 746.96 L2654.53 747.71 L2655.50 747.93 L2656.15 779.16 L2657.20 829.50 L2657.78 830.82 L2659.40 829.98 L2661.02 830.21 L2662.00 815.00 L2664.27 831.19 L2665.20 799.60 L2667.51 832.65 L2668.20 832.99" fill="none" stroke="#8ab8ff" stroke-width="2" stroke-linejoin="round"/>
<rect x="1436.00" y="965.00" width="28.00" height="8.00" rx="2.2" fill="#73bf69"/>
<text x="1478.96" y="976.70" font-size="24.71" textLength="64.82" lengthAdjust="spacingAndGlyphs" fill="#ccccdc">Direct</text>
<rect x="1564.30" y="965.00" width="28.00" height="8.00" rx="2.2" fill="#f2cc0c"/>
<text x="1607.33" y="976.70" font-size="24.71" textLength="61.31" lengthAdjust="spacingAndGlyphs" fill="#ccccdc">Proxy</text>
<rect x="1690.20" y="965.00" width="28.00" height="8.00" rx="2.2" fill="#8ab8ff"/>
<text x="1732.41" y="976.70" font-size="24.71" textLength="86.70" lengthAdjust="spacingAndGlyphs" fill="#ccccdc">Proxy^2</text>
<rect x="19.00" y="1022.00" width="1350.00" height="40.00" rx="4" fill="#16171b" stroke="#1f2024" stroke-width="2"/>
</svg>
</body></html>
